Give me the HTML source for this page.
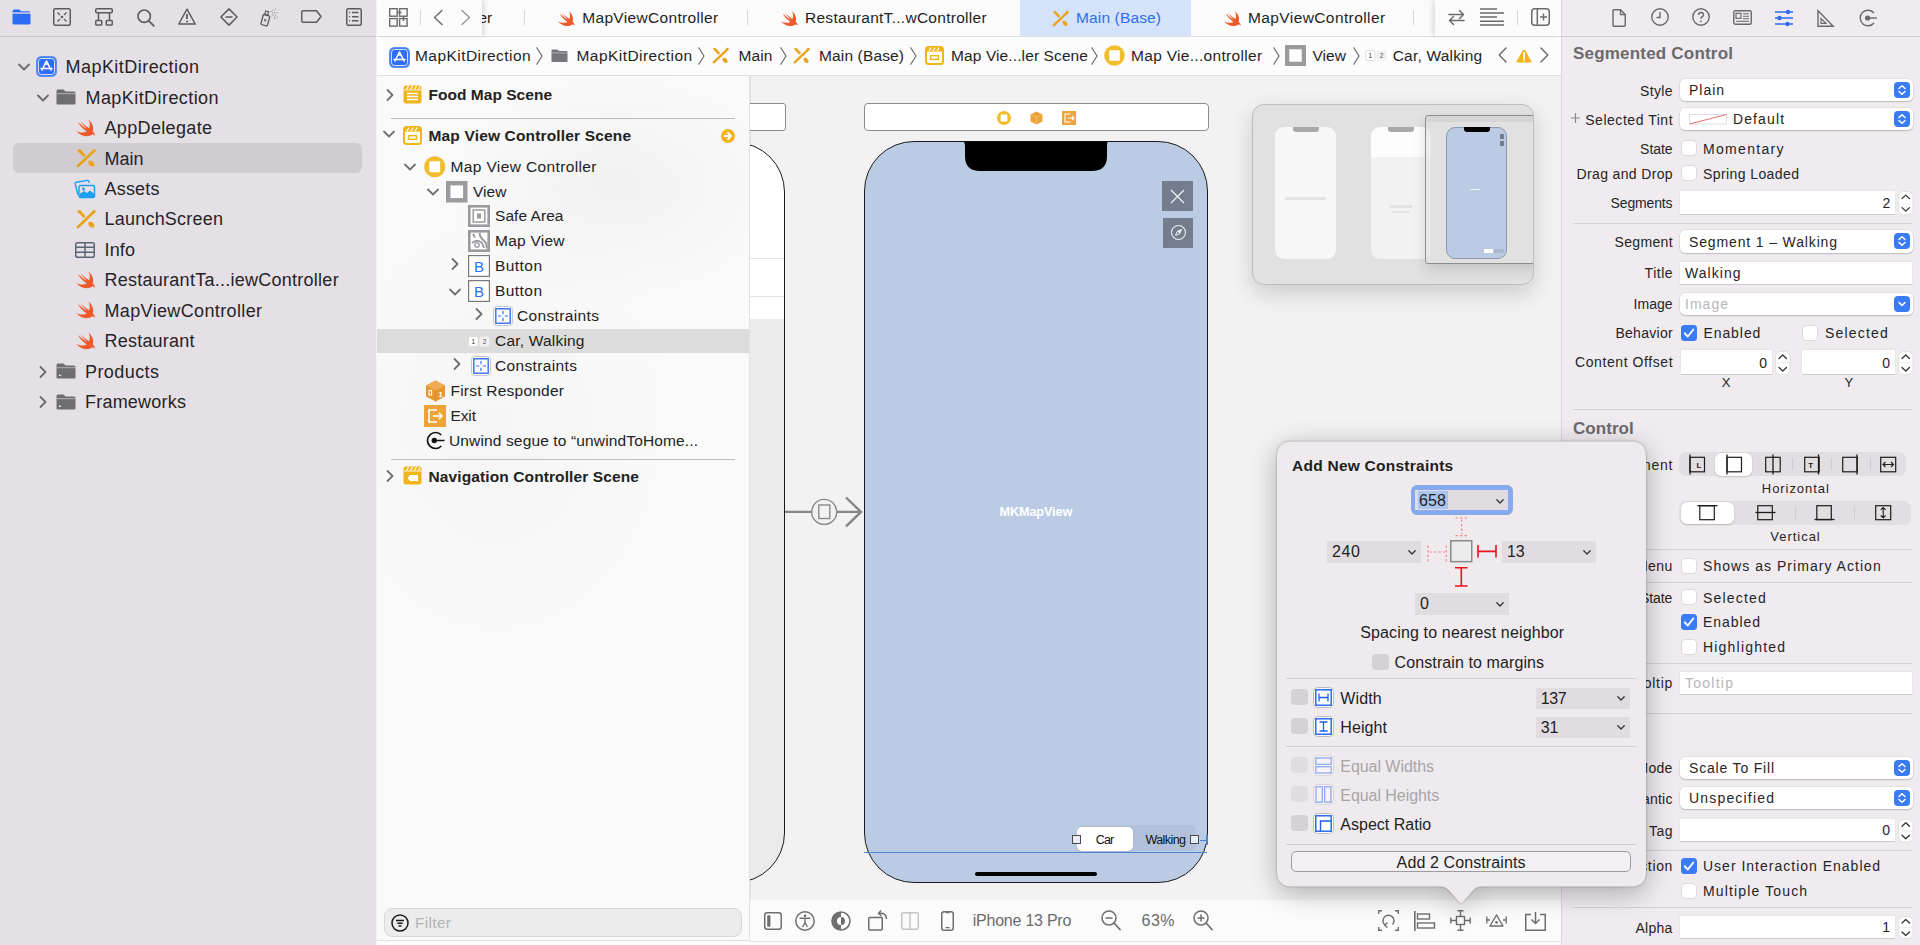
<!DOCTYPE html>
<html><head><meta charset="utf-8">
<style>
*{box-sizing:border-box}
html,body{margin:0;padding:0}
body{width:1920px;height:945px;position:relative;overflow:hidden;font-family:"Liberation Sans",sans-serif;color:#1f1f1f;background:#f2f2f2}
.a{position:absolute}
.t{position:absolute;white-space:nowrap;line-height:1}
svg{position:absolute;overflow:visible}
</style></head><body>
<div class="a" style="left:0px;top:0px;width:376px;height:945px;background:#e5e0e5;"></div>
<div class="a" style="left:0px;top:36px;width:376px;height:1px;background:#cdc8cd;"></div>
<svg style="left:12px;top:9px" width="19" height="16" viewBox="0 0 19 16"><path d="M0.5 2.2 Q0.5 0.5 2.2 0.5 L6.5 0.5 Q7.5 0.5 8.2 1.3 L9 2.3 L17 2.3 Q18.5 2.3 18.5 3.8 L18.5 14 Q18.5 15.5 17 15.5 L2 15.5 Q0.5 15.5 0.5 14 Z" fill="#2e6bf5"/><rect x="0" y="3.4" width="19" height="1.3" fill="#e5e0e5"/></svg>
<svg style="left:53px;top:8px" width="18" height="18" viewBox="0 0 18 18"><rect x="0.75" y="0.75" width="16.5" height="16.5" rx="1.5" fill="none" stroke="#5e5b5e" stroke-width="1.5"/><path d="M4.5 4.5 L7 7 M13.5 4.5 L11 7 M4.5 13.5 L7 11 M13.5 13.5 L11 11" stroke="#5e5b5e" stroke-width="1.3"/><circle cx="9" cy="9" r="1.3" fill="#5e5b5e"/></svg>
<svg style="left:95px;top:8px" width="18" height="18" viewBox="0 0 18 18"><rect x="0.75" y="0.75" width="16.5" height="4" rx="1" fill="none" stroke="#5e5b5e" stroke-width="1.5"/><path d="M3.5 5 L3.5 12 M14.5 5 L14.5 12" stroke="#5e5b5e" stroke-width="1.5"/><rect x="0.75" y="12.5" width="6" height="4.5" rx="0.8" fill="none" stroke="#5e5b5e" stroke-width="1.5"/><rect x="11.25" y="12.5" width="6" height="4.5" rx="0.8" fill="none" stroke="#5e5b5e" stroke-width="1.5"/></svg>
<svg style="left:137px;top:9px" width="18" height="18" viewBox="0 0 18 18"><circle cx="7.2" cy="7.2" r="6.2" fill="none" stroke="#5e5b5e" stroke-width="1.6"/><path d="M11.8 11.8 L16.8 16.8" stroke="#5e5b5e" stroke-width="1.8" stroke-linecap="round"/></svg>
<svg style="left:178px;top:8px" width="18" height="17" viewBox="0 0 18 17"><path d="M9 1.2 L17.2 16 L0.8 16 Z" fill="none" stroke="#5e5b5e" stroke-width="1.5" stroke-linejoin="round"/><path d="M9 6 L9 11" stroke="#5e5b5e" stroke-width="1.8"/><circle cx="9" cy="13.4" r="1" fill="#5e5b5e"/></svg>
<svg style="left:220px;top:8px" width="18" height="18" viewBox="0 0 18 18"><path d="M9 0.9 L17.1 9 L9 17.1 L0.9 9 Z" fill="none" stroke="#5e5b5e" stroke-width="1.5" stroke-linejoin="round"/><path d="M5.5 9 L12.5 9" stroke="#5e5b5e" stroke-width="1.5"/></svg>
<svg style="left:260px;top:8px" width="22" height="19" viewBox="0 0 22 19"><path d="M4 6.5 L9 7.8 Q10 8.1 9.8 9 L7.5 17 Q7.2 18 6.2 17.8 L1.7 16.6 Q0.7 16.3 1 15.3 L3 8 Q3.3 6.2 4 6.5 Z" fill="none" stroke="#5e5b5e" stroke-width="1.3"/><rect x="5.2" y="3.2" width="3" height="3.5" transform="rotate(15 6.7 5)" fill="none" stroke="#5e5b5e" stroke-width="1.2"/><path d="M4.2 11 L6.2 13.5 M6.5 11.3 L4 13.2" stroke="#5e5b5e" stroke-width="1"/><g fill="#5e5b5e" opacity="0.75"><circle cx="11" cy="3.5" r="0.6"/><circle cx="13" cy="2.5" r="0.6"/><circle cx="15.5" cy="1" r="0.6"/><circle cx="12.5" cy="5" r="0.6"/><circle cx="14.5" cy="4.5" r="0.6"/><circle cx="17" cy="4.8" r="0.6"/><circle cx="13" cy="7" r="0.6"/><circle cx="15.5" cy="7" r="0.6"/><circle cx="14.5" cy="9" r="0.6"/><circle cx="17" cy="9" r="0.6"/><circle cx="15" cy="10.5" r="0.6"/></g></svg>
<svg style="left:301px;top:10px" width="21" height="13" viewBox="0 0 21 13"><path d="M2 0.75 L15.5 0.75 L20 6.5 L15.5 12.25 L2 12.25 Q0.75 12.25 0.75 11 L0.75 2 Q0.75 0.75 2 0.75 Z" fill="none" stroke="#5e5b5e" stroke-width="1.5" stroke-linejoin="round"/></svg>
<svg style="left:346px;top:8px" width="16" height="18" viewBox="0 0 16 18"><rect x="0.75" y="0.75" width="14.5" height="16.5" rx="1.5" fill="none" stroke="#5e5b5e" stroke-width="1.5"/><path d="M6 4.5 L12.5 4.5 M6 8.7 L12.5 8.7 M6 12.7 L12.5 12.7" stroke="#5e5b5e" stroke-width="1.5"/><circle cx="3.6" cy="4.5" r="0.7" fill="#5e5b5e"/><circle cx="3.6" cy="8.7" r="0.7" fill="#5e5b5e"/><circle cx="3.6" cy="12.7" r="0.7" fill="#5e5b5e"/></svg>
<div class="a" style="left:12.5px;top:143px;width:349px;height:30px;background:#d1ccd1;border-radius:6px;"></div>
<svg style="left:18px;top:63.3px" width="12" height="8" viewBox="0 0 12 8"><path d="M1 1.5 L6 6.5 L11 1.5" fill="none" stroke="#6d6a6d" stroke-width="1.8" stroke-linecap="round" stroke-linejoin="round"/></svg>
<svg style="left:36px;top:56.3px" width="21" height="21" viewBox="0 0 21 21"><rect x="0.75" y="0.75" width="19.5" height="19.5" rx="4.5" fill="#2f6df6" stroke="#5a8ff8" stroke-width="1.5"/><rect x="2.5" y="2.5" width="16" height="16" rx="3" fill="none" stroke="#fff" stroke-width="0.9" opacity="0.9"/><path d="M10.5 5 L6 14 M10.5 5 L15 14 M5 12.5 L16 12.5 M8.8 8 L12.2 8" stroke="#fff" stroke-width="1.6" stroke-linecap="round" fill="none"/></svg>
<div class="t" style="left:65.5px;top:58.2px;font-size:18px;color:#262426;letter-spacing:0.46px;">MapKitDirection</div>
<svg style="left:37px;top:93.75px" width="12" height="8" viewBox="0 0 12 8"><path d="M1 1.5 L6 6.5 L11 1.5" fill="none" stroke="#6d6a6d" stroke-width="1.8" stroke-linecap="round" stroke-linejoin="round"/></svg>
<svg style="left:56px;top:89.25px" width="20" height="16" viewBox="0 0 20 16"><path d="M0.5 2 Q0.5 0.5 2 0.5 L7 0.5 Q8 0.5 8.6 1.5 L9.2 2.5 L18 2.5 Q19.5 2.5 19.5 4 L19.5 14.5 Q19.5 15.5 18.5 15.5 L1.5 15.5 Q0.5 15.5 0.5 14.5 Z" fill="#6e6d72"/><rect x="0.5" y="4.2" width="19" height="1" fill="#e5e0e5" opacity="0.6"/></svg>
<div class="t" style="left:85.5px;top:88.6px;font-size:18px;color:#262426;letter-spacing:0.43px;">MapKitDirection</div>
<svg style="left:76px;top:117.69999999999999px" width="20" height="20" viewBox="0 0 20 20"><path d="M12.4 1.4 C16.5 4.5 18 9.5 16.8 13.3 C18.2 15 19.2 16.5 19.4 17.8 C18.2 16.6 17 16.3 16 16.8 C13 18.6 8 18.8 4.5 16.5 C2.5 15.3 1 14 0.2 13.1 C3.5 14.8 7.5 15.2 10.8 13.6 C7.5 11.2 4 8 1.9 3.9 C5 6.8 8.5 9.5 11 11 C8.5 8.5 6 5.5 4.3 3.2 C7.3 6 10.5 8.5 13 10.2 C14.3 7.3 14 4 12.4 1.4 Z" fill="#ef5a2b"/></svg>
<div class="t" style="left:104.5px;top:119.1px;font-size:18px;color:#262426;letter-spacing:0.34px;">AppDelegate</div>
<svg style="left:76px;top:148.14999999999998px" width="20" height="20" viewBox="0 0 20 20"><path d="M0.8 2.2 L4 0.8 L9.6 7.2 L7.6 9 Z" fill="#eaa31d"/><path d="M2 18 L17.2 3.6" stroke="#eaa31d" stroke-width="2.7" stroke-linecap="round"/><circle cx="18" cy="2.6" r="1.7" fill="#eaa31d"/><path d="M12.3 13.2 Q15 11.8 17.2 14 Q19.3 16.5 17.8 18.6 Q15.8 19.2 13.6 17.6 Q12.2 16 12.3 13.2 Z" fill="#eaa31d"/></svg>
<div class="t" style="left:104.5px;top:149.5px;font-size:18px;color:#262426;letter-spacing:-0.01px;">Main</div>
<svg style="left:74px;top:179.6px" width="22" height="18" viewBox="0 0 22 18"><g fill="none" stroke="#1ea0f2" stroke-width="1.4"><path d="M4 15 L1.2 4 Q0.9 2.6 2.3 2.3 L13.3 0.4 Q14.6 0.2 14.9 1.5 L15.2 3"/></g><rect x="5" y="5.5" width="15.5" height="12" rx="1.5" fill="none" stroke="#1ea0f2" stroke-width="1.5"/><path d="M5.5 17 L5.5 14 L10 11 L13 13 L16 10.5 L20 13.5 L20 17 Z" fill="#1ea0f2"/><circle cx="9.5" cy="9" r="1.5" fill="#1ea0f2"/></svg>
<div class="t" style="left:104.5px;top:180.0px;font-size:18px;color:#262426;letter-spacing:0.20px;">Assets</div>
<svg style="left:76px;top:209.05px" width="20" height="20" viewBox="0 0 20 20"><path d="M0.8 2.2 L4 0.8 L9.6 7.2 L7.6 9 Z" fill="#eaa31d"/><path d="M2 18 L17.2 3.6" stroke="#eaa31d" stroke-width="2.7" stroke-linecap="round"/><circle cx="18" cy="2.6" r="1.7" fill="#eaa31d"/><path d="M12.3 13.2 Q15 11.8 17.2 14 Q19.3 16.5 17.8 18.6 Q15.8 19.2 13.6 17.6 Q12.2 16 12.3 13.2 Z" fill="#eaa31d"/></svg>
<div class="t" style="left:104.5px;top:210.4px;font-size:18px;color:#262426;letter-spacing:0.22px;">LaunchScreen</div>
<svg style="left:75px;top:241.5px" width="20" height="16" viewBox="0 0 20 16"><rect x="0.75" y="0.75" width="18.5" height="14.5" rx="1.8" fill="none" stroke="#5a6674" stroke-width="1.5"/><path d="M1 5.2 L19 5.2 M1 10.2 L19 10.2 M10 1 L10 15" stroke="#5a6674" stroke-width="1.5"/></svg>
<div class="t" style="left:104.5px;top:240.9px;font-size:18px;color:#262426;letter-spacing:0.16px;">Info</div>
<svg style="left:76px;top:269.95px" width="20" height="20" viewBox="0 0 20 20"><path d="M12.4 1.4 C16.5 4.5 18 9.5 16.8 13.3 C18.2 15 19.2 16.5 19.4 17.8 C18.2 16.6 17 16.3 16 16.8 C13 18.6 8 18.8 4.5 16.5 C2.5 15.3 1 14 0.2 13.1 C3.5 14.8 7.5 15.2 10.8 13.6 C7.5 11.2 4 8 1.9 3.9 C5 6.8 8.5 9.5 11 11 C8.5 8.5 6 5.5 4.3 3.2 C7.3 6 10.5 8.5 13 10.2 C14.3 7.3 14 4 12.4 1.4 Z" fill="#ef5a2b"/></svg>
<div class="t" style="left:104.5px;top:271.3px;font-size:18px;color:#262426;letter-spacing:0.26px;">RestaurantTa...iewController</div>
<svg style="left:76px;top:300.4px" width="20" height="20" viewBox="0 0 20 20"><path d="M12.4 1.4 C16.5 4.5 18 9.5 16.8 13.3 C18.2 15 19.2 16.5 19.4 17.8 C18.2 16.6 17 16.3 16 16.8 C13 18.6 8 18.8 4.5 16.5 C2.5 15.3 1 14 0.2 13.1 C3.5 14.8 7.5 15.2 10.8 13.6 C7.5 11.2 4 8 1.9 3.9 C5 6.8 8.5 9.5 11 11 C8.5 8.5 6 5.5 4.3 3.2 C7.3 6 10.5 8.5 13 10.2 C14.3 7.3 14 4 12.4 1.4 Z" fill="#ef5a2b"/></svg>
<div class="t" style="left:104.5px;top:301.8px;font-size:18px;color:#262426;letter-spacing:0.36px;">MapViewController</div>
<svg style="left:76px;top:330.85px" width="20" height="20" viewBox="0 0 20 20"><path d="M12.4 1.4 C16.5 4.5 18 9.5 16.8 13.3 C18.2 15 19.2 16.5 19.4 17.8 C18.2 16.6 17 16.3 16 16.8 C13 18.6 8 18.8 4.5 16.5 C2.5 15.3 1 14 0.2 13.1 C3.5 14.8 7.5 15.2 10.8 13.6 C7.5 11.2 4 8 1.9 3.9 C5 6.8 8.5 9.5 11 11 C8.5 8.5 6 5.5 4.3 3.2 C7.3 6 10.5 8.5 13 10.2 C14.3 7.3 14 4 12.4 1.4 Z" fill="#ef5a2b"/></svg>
<div class="t" style="left:104.5px;top:332.2px;font-size:18px;color:#262426;letter-spacing:0.22px;">Restaurant</div>
<svg style="left:39px;top:365.8px" width="8" height="12" viewBox="0 0 8 12"><path d="M1.5 1 L6.5 6 L1.5 11" fill="none" stroke="#6d6a6d" stroke-width="1.8" stroke-linecap="round" stroke-linejoin="round"/></svg>
<svg style="left:56px;top:363.3px" width="20" height="16" viewBox="0 0 20 16"><path d="M0.5 2 Q0.5 0.5 2 0.5 L7 0.5 Q8 0.5 8.6 1.5 L9.2 2.5 L18 2.5 Q19.5 2.5 19.5 4 L19.5 14.5 Q19.5 15.5 18.5 15.5 L1.5 15.5 Q0.5 15.5 0.5 14.5 Z" fill="#6e6d72"/><rect x="0.5" y="4.2" width="19" height="1" fill="#e5e0e5" opacity="0.6"/><path d="M3 11 L6 13 L3 13 Z" fill="#e5e0e5"/></svg>
<div class="t" style="left:85px;top:362.7px;font-size:18px;color:#262426;letter-spacing:0.42px;">Products</div>
<svg style="left:39px;top:396.25px" width="8" height="12" viewBox="0 0 8 12"><path d="M1.5 1 L6.5 6 L1.5 11" fill="none" stroke="#6d6a6d" stroke-width="1.8" stroke-linecap="round" stroke-linejoin="round"/></svg>
<svg style="left:56px;top:393.75px" width="20" height="16" viewBox="0 0 20 16"><path d="M0.5 2 Q0.5 0.5 2 0.5 L7 0.5 Q8 0.5 8.6 1.5 L9.2 2.5 L18 2.5 Q19.5 2.5 19.5 4 L19.5 14.5 Q19.5 15.5 18.5 15.5 L1.5 15.5 Q0.5 15.5 0.5 14.5 Z" fill="#6e6d72"/><rect x="0.5" y="4.2" width="19" height="1" fill="#e5e0e5" opacity="0.6"/><path d="M3 11 L6 13 L3 13 Z" fill="#e5e0e5"/></svg>
<div class="t" style="left:85px;top:393.1px;font-size:18px;color:#262426;letter-spacing:0.22px;">Frameworks</div>
<div class="a" style="left:377px;top:0px;width:1185px;height:36px;background:#fbfbfb;"></div>
<div class="a" style="left:377px;top:36px;width:1185px;height:1px;background:#dedede;"></div>
<div class="a" style="left:377px;top:37px;width:1185px;height:38px;background:#fcfcfc;"></div>
<div class="a" style="left:377px;top:75px;width:1185px;height:1px;background:#e0e0e0;"></div>
<div class="t" style="left:478.5px;top:9.8px;font-size:15.5px;color:#1f1f1f;">er</div>
<div class="a" style="left:524px;top:9.5px;width:1px;height:15.5px;background:#d6d6d6;"></div>
<svg style="left:557.5px;top:10.3px" width="17.5" height="17.5" viewBox="0 0 20 20"><path d="M12.4 1.4 C16.5 4.5 18 9.5 16.8 13.3 C18.2 15 19.2 16.5 19.4 17.8 C18.2 16.6 17 16.3 16 16.8 C13 18.6 8 18.8 4.5 16.5 C2.5 15.3 1 14 0.2 13.1 C3.5 14.8 7.5 15.2 10.8 13.6 C7.5 11.2 4 8 1.9 3.9 C5 6.8 8.5 9.5 11 11 C8.5 8.5 6 5.5 4.3 3.2 C7.3 6 10.5 8.5 13 10.2 C14.3 7.3 14 4 12.4 1.4 Z" fill="#ef5a2b"/></svg>
<div class="t" style="left:582.2px;top:9.8px;font-size:15.5px;color:#1f1f1f;letter-spacing:0.33px;">MapViewController</div>
<div class="a" style="left:747px;top:9.5px;width:1px;height:15.5px;background:#d6d6d6;"></div>
<svg style="left:780.5px;top:10.3px" width="17.5" height="17.5" viewBox="0 0 20 20"><path d="M12.4 1.4 C16.5 4.5 18 9.5 16.8 13.3 C18.2 15 19.2 16.5 19.4 17.8 C18.2 16.6 17 16.3 16 16.8 C13 18.6 8 18.8 4.5 16.5 C2.5 15.3 1 14 0.2 13.1 C3.5 14.8 7.5 15.2 10.8 13.6 C7.5 11.2 4 8 1.9 3.9 C5 6.8 8.5 9.5 11 11 C8.5 8.5 6 5.5 4.3 3.2 C7.3 6 10.5 8.5 13 10.2 C14.3 7.3 14 4 12.4 1.4 Z" fill="#ef5a2b"/></svg>
<div class="t" style="left:805px;top:9.8px;font-size:15.5px;color:#1f1f1f;letter-spacing:0.28px;">RestaurantT...wController</div>
<div class="a" style="left:1019.5px;top:0px;width:171.5px;height:36px;background:#d4e2fa;"></div>
<svg style="left:1052px;top:9.5px" width="17" height="17" viewBox="0 0 20 20"><path d="M0.8 2.2 L4 0.8 L9.6 7.2 L7.6 9 Z" fill="#eaa31d"/><path d="M2 18 L17.2 3.6" stroke="#eaa31d" stroke-width="2.7" stroke-linecap="round"/><circle cx="18" cy="2.6" r="1.7" fill="#eaa31d"/><path d="M12.3 13.2 Q15 11.8 17.2 14 Q19.3 16.5 17.8 18.6 Q15.8 19.2 13.6 17.6 Q12.2 16 12.3 13.2 Z" fill="#eaa31d"/></svg>
<div class="t" style="left:1076px;top:9.8px;font-size:15.5px;color:#2d6ff0;letter-spacing:0.14px;">Main (Base)</div>
<svg style="left:1223.5px;top:10.3px" width="17.5" height="17.5" viewBox="0 0 20 20"><path d="M12.4 1.4 C16.5 4.5 18 9.5 16.8 13.3 C18.2 15 19.2 16.5 19.4 17.8 C18.2 16.6 17 16.3 16 16.8 C13 18.6 8 18.8 4.5 16.5 C2.5 15.3 1 14 0.2 13.1 C3.5 14.8 7.5 15.2 10.8 13.6 C7.5 11.2 4 8 1.9 3.9 C5 6.8 8.5 9.5 11 11 C8.5 8.5 6 5.5 4.3 3.2 C7.3 6 10.5 8.5 13 10.2 C14.3 7.3 14 4 12.4 1.4 Z" fill="#ef5a2b"/></svg>
<div class="t" style="left:1248px;top:9.8px;font-size:15.5px;color:#1f1f1f;letter-spacing:0.40px;">MapViewController</div>
<div class="a" style="left:1413px;top:9.5px;width:1px;height:15.5px;background:#d6d6d6;"></div>
<div class="a" style="left:1435px;top:0px;width:126px;height:36px;background:#fbfbfb;box-shadow:-3px 0 4px rgba(0,0,0,0.10);"></div>
<svg style="left:1447px;top:8px" width="19" height="18" viewBox="0 0 19 18"><path d="M2 6.5 L16.5 6.5 M12.5 2.5 L16.5 6.5 L12.5 10.5 M17 12.5 L2.5 12.5 M6.5 8.5 L2.5 12.5 L6.5 16.5" fill="none" stroke="#6b6b6b" stroke-width="1.5" stroke-linecap="round" stroke-linejoin="round"/></svg>
<svg style="left:1479px;top:8px" width="26" height="18" viewBox="0 0 26 18"><path d="M1 1 L18 1 M1 5 L25 5 M1 9 L18 9 M1 13.3 L25 13.3 M1 17 L25 17" stroke="#6b6b6b" stroke-width="1.4"/></svg>
<div class="a" style="left:1517px;top:9.5px;width:1px;height:15.5px;background:#d6d6d6;"></div>
<svg style="left:1531px;top:8px" width="19" height="18" viewBox="0 0 19 18"><rect x="0.75" y="0.75" width="17.5" height="16.5" rx="3" fill="none" stroke="#6b6b6b" stroke-width="1.5"/><path d="M6.3 1 L6.3 17" stroke="#6b6b6b" stroke-width="1.5"/><path d="M12.5 5.5 L12.5 12.5 M9 9 L16 9" stroke="#6b6b6b" stroke-width="1.4"/></svg>
<div class="a" style="left:377px;top:0px;width:105px;height:36px;background:#fbfbfb;box-shadow:3px 0 4px rgba(0,0,0,0.10);"></div>
<svg style="left:389px;top:8px" width="19" height="19" viewBox="0 0 19 19"><g fill="none" stroke="#6b6b6b" stroke-width="1.4"><rect x="0.7" y="0.7" width="7.5" height="7.5"/><rect x="10.6" y="0.7" width="7.5" height="7.5"/><rect x="0.7" y="10.6" width="7.5" height="7.5"/><rect x="10.6" y="10.6" width="7.5" height="7.5"/></g><path d="M8.5 4.5 L12.5 4.5 M14.5 8.5 L14.5 13" stroke="#6b6b6b" stroke-width="1.4"/></svg>
<div class="a" style="left:420px;top:9.5px;width:1px;height:15.5px;background:#d6d6d6;"></div>
<svg style="left:433px;top:10px" width="10" height="15" viewBox="0 0 10 15"><path d="M9 0.5 L1.5 7.5 L9 14.5" fill="none" stroke="#6b6b6b" stroke-width="1.5" stroke-linecap="round" stroke-linejoin="round"/></svg>
<svg style="left:460.5px;top:10px" width="10" height="15" viewBox="0 0 10 15"><path d="M1 0.5 L8.5 7.5 L1 14.5" fill="none" stroke="#9a9a9a" stroke-width="1.5" stroke-linecap="round" stroke-linejoin="round"/></svg>
<svg style="left:388.5px;top:46.5px" width="21" height="21" viewBox="0 0 21 21"><rect x="0.75" y="0.75" width="19.5" height="19.5" rx="4.5" fill="#2f6df6" stroke="#5a8ff8" stroke-width="1.5"/><rect x="2.5" y="2.5" width="16" height="16" rx="3" fill="none" stroke="#fff" stroke-width="0.9" opacity="0.9"/><path d="M10.5 5 L6 14 M10.5 5 L15 14 M5 12.5 L16 12.5 M8.8 8 L12.2 8" stroke="#fff" stroke-width="1.6" stroke-linecap="round" fill="none"/></svg>
<div class="t" style="left:415px;top:47.9px;font-size:15.5px;color:#1f1f1f;letter-spacing:0.44px;">MapKitDirection</div>
<svg style="left:536px;top:46.5px" width="7" height="18" viewBox="0 0 7 18"><path d="M0.8 0.8 L6 9 L0.8 17.2" fill="none" stroke="#6a6a6a" stroke-width="1.2" stroke-linecap="round" stroke-linejoin="round"/></svg>
<svg style="left:551px;top:48.5px" width="17" height="13.5" viewBox="0 0 20 16"><path d="M0.5 2 Q0.5 0.5 2 0.5 L7 0.5 Q8 0.5 8.6 1.5 L9.2 2.5 L18 2.5 Q19.5 2.5 19.5 4 L19.5 14.5 Q19.5 15.5 18.5 15.5 L1.5 15.5 Q0.5 15.5 0.5 14.5 Z" fill="#77767b"/><rect x="0.5" y="4.2" width="19" height="1" fill="#e5e0e5" opacity="0.6"/></svg>
<div class="t" style="left:576.5px;top:47.9px;font-size:15.5px;color:#1f1f1f;letter-spacing:0.44px;">MapKitDirection</div>
<svg style="left:698px;top:46.5px" width="7" height="18" viewBox="0 0 7 18"><path d="M0.8 0.8 L6 9 L0.8 17.2" fill="none" stroke="#6a6a6a" stroke-width="1.2" stroke-linecap="round" stroke-linejoin="round"/></svg>
<svg style="left:711.5px;top:47px" width="17" height="17" viewBox="0 0 20 20"><path d="M0.8 2.2 L4 0.8 L9.6 7.2 L7.6 9 Z" fill="#eaa31d"/><path d="M2 18 L17.2 3.6" stroke="#eaa31d" stroke-width="2.7" stroke-linecap="round"/><circle cx="18" cy="2.6" r="1.7" fill="#eaa31d"/><path d="M12.3 13.2 Q15 11.8 17.2 14 Q19.3 16.5 17.8 18.6 Q15.8 19.2 13.6 17.6 Q12.2 16 12.3 13.2 Z" fill="#eaa31d"/></svg>
<div class="t" style="left:738.5px;top:47.9px;font-size:15.5px;color:#1f1f1f;letter-spacing:0.13px;">Main</div>
<svg style="left:780px;top:46.5px" width="7" height="18" viewBox="0 0 7 18"><path d="M0.8 0.8 L6 9 L0.8 17.2" fill="none" stroke="#6a6a6a" stroke-width="1.2" stroke-linecap="round" stroke-linejoin="round"/></svg>
<svg style="left:793px;top:47px" width="17" height="17" viewBox="0 0 20 20"><path d="M0.8 2.2 L4 0.8 L9.6 7.2 L7.6 9 Z" fill="#eaa31d"/><path d="M2 18 L17.2 3.6" stroke="#eaa31d" stroke-width="2.7" stroke-linecap="round"/><circle cx="18" cy="2.6" r="1.7" fill="#eaa31d"/><path d="M12.3 13.2 Q15 11.8 17.2 14 Q19.3 16.5 17.8 18.6 Q15.8 19.2 13.6 17.6 Q12.2 16 12.3 13.2 Z" fill="#eaa31d"/></svg>
<div class="t" style="left:819px;top:47.9px;font-size:15.5px;color:#1f1f1f;letter-spacing:0.14px;">Main (Base)</div>
<svg style="left:910px;top:46.5px" width="7" height="18" viewBox="0 0 7 18"><path d="M0.8 0.8 L6 9 L0.8 17.2" fill="none" stroke="#6a6a6a" stroke-width="1.2" stroke-linecap="round" stroke-linejoin="round"/></svg>
<svg style="left:924.5px;top:46px" width="19" height="19" viewBox="0 0 19 19"><rect x="1" y="1" width="17" height="17" rx="2.5" fill="#fff" stroke="#f0b41c" stroke-width="2"/><rect x="1" y="1" width="17" height="4.6" fill="#f0b41c"/><path d="M4 5.2 L6 1.6 M8 5.2 L10 1.6 M12 5.2 L14 1.6" stroke="#fff" stroke-width="1.2"/><rect x="5.5" y="9.7" width="8" height="3.6" fill="none" stroke="#f0b41c" stroke-width="1.4"/></svg>
<div class="t" style="left:951px;top:47.9px;font-size:15.5px;color:#1f1f1f;letter-spacing:0.11px;">Map Vie...ler Scene</div>
<svg style="left:1091px;top:46.5px" width="7" height="18" viewBox="0 0 7 18"><path d="M0.8 0.8 L6 9 L0.8 17.2" fill="none" stroke="#6a6a6a" stroke-width="1.2" stroke-linecap="round" stroke-linejoin="round"/></svg>
<svg style="left:1104px;top:44.5px" width="21" height="21" viewBox="0 0 21 21"><circle cx="10.5" cy="10.5" r="10.3" fill="#f2bd2a"/><rect x="5.2" y="5.2" width="10.6" height="10.6" rx="0.8" fill="#fff"/></svg>
<div class="t" style="left:1131px;top:47.9px;font-size:15.5px;color:#1f1f1f;letter-spacing:0.31px;">Map Vie...ontroller</div>
<svg style="left:1272.5px;top:46.5px" width="7" height="18" viewBox="0 0 7 18"><path d="M0.8 0.8 L6 9 L0.8 17.2" fill="none" stroke="#6a6a6a" stroke-width="1.2" stroke-linecap="round" stroke-linejoin="round"/></svg>
<svg style="left:1284.5px;top:44.5px" width="21" height="21" viewBox="0 0 21 21"><rect x="0" y="0" width="21" height="21" fill="#9a9a9f"/><rect x="4.3" y="4.3" width="12.4" height="12.4" fill="#fff"/></svg>
<div class="t" style="left:1312.5px;top:47.9px;font-size:15.5px;color:#1f1f1f;letter-spacing:0.06px;">View</div>
<svg style="left:1352.5px;top:46.5px" width="7" height="18" viewBox="0 0 7 18"><path d="M0.8 0.8 L6 9 L0.8 17.2" fill="none" stroke="#6a6a6a" stroke-width="1.2" stroke-linecap="round" stroke-linejoin="round"/></svg>
<svg style="left:1365px;top:50px" width="22" height="11" viewBox="0 0 22 11"><rect x="0.5" y="0.5" width="9.5" height="10" rx="1.5" fill="#fff" stroke="#d8d8d8" stroke-width="0.8"/><rect x="11.5" y="0.5" width="10" height="10" rx="1.5" fill="#f0f0f0"/><text x="5.2" y="8" font-size="6.5" text-anchor="middle" font-family="Liberation Sans" fill="#333">1</text><text x="16.5" y="8" font-size="6.5" text-anchor="middle" font-family="Liberation Sans" fill="#555">2</text></svg>
<div class="t" style="left:1392.7px;top:47.9px;font-size:15.5px;color:#1f1f1f;letter-spacing:0.20px;">Car, Walking</div>
<svg style="left:1498px;top:47px" width="9" height="16" viewBox="0 0 9 16"><path d="M8 1 L1.2 8 L8 15" fill="none" stroke="#6a6a6a" stroke-width="1.4" stroke-linecap="round" stroke-linejoin="round"/></svg>
<svg style="left:1516px;top:49px" width="16" height="14" viewBox="0 0 16 14"><path d="M8 0.8 Q8.8 0.8 9.3 1.6 L15.4 12.2 Q15.9 13.4 14.6 13.4 L1.4 13.4 Q0.1 13.4 0.6 12.2 L6.7 1.6 Q7.2 0.8 8 0.8 Z" fill="#f2b31d"/><path d="M8 4 L8 9" stroke="#fff" stroke-width="1.8" stroke-linecap="round"/><circle cx="8" cy="11.3" r="1" fill="#fff"/></svg>
<svg style="left:1540px;top:47px" width="9" height="16" viewBox="0 0 9 16"><path d="M1 1 L7.8 8 L1 15" fill="none" stroke="#6a6a6a" stroke-width="1.4" stroke-linecap="round" stroke-linejoin="round"/></svg>
<div class="a" style="left:750px;top:76px;width:811px;height:824px;background:#f2f2f2;"></div>
<div class="a" style="left:750px;top:76px;width:1px;height:864px;background:#e4e4e4;"></div>
<div class="a" style="left:729px;top:103.2px;width:56.5px;height:27.8px;background:#fff;border:1px solid #8c8c8c;border-radius:3px;"></div>
<div class="a" style="left:684px;top:141.5px;width:100.5px;height:741px;border:1.6px solid #1b1b1b;border-radius:50px;background:linear-gradient(#fff 0,#fff 176px,#ebebeb 176px);overflow:hidden"><div class="a" style="left:60px;top:115.5px;width:40px;height:1px;background:#e4e4e4"></div><div class="a" style="left:60px;top:153.5px;width:40px;height:1px;background:#e4e4e4"></div></div>
<div class="a" style="left:863.5px;top:103.2px;width:345px;height:27.8px;background:#fff;border:1px solid #8c8c8c;border-radius:4px;"></div>
<svg style="left:997px;top:110.8px" width="14" height="14" viewBox="0 0 14 14"><circle cx="7" cy="7" r="7" fill="#f2bd2a"/><rect x="3.6" y="3.6" width="6.8" height="6.8" rx="0.6" fill="#fff"/></svg>
<svg style="left:1030px;top:111px" width="13" height="14" viewBox="0 0 13 14"><path d="M6.5 0.5 L12.5 3.5 L12.5 10.5 L6.5 13.5 L0.5 10.5 L0.5 3.5 Z" fill="#eda33b"/><path d="M0.5 3.5 L6.5 6.5 L12.5 3.5 M6.5 6.5 L6.5 13.5" stroke="#f6c98a" stroke-width="0.6" fill="none"/></svg>
<svg style="left:1062px;top:111px" width="14" height="14" viewBox="0 0 14 14"><rect x="0" y="0" width="14" height="14" fill="#eda33b"/><path d="M8.5 3 L3 3 L3 11 L8.5 11" fill="none" stroke="#fff" stroke-width="1.1"/><path d="M6 7 L12 7 M10 5 L12 7 L10 9" fill="none" stroke="#fff" stroke-width="1.1"/></svg>
<div class="a" style="left:864px;top:141px;width:343.5px;height:742px;border:1.6px solid #1b1b1b;border-radius:50px;background:#bccbe4;overflow:hidden"></div>
<svg style="left:963px;top:141px" width="146" height="31" viewBox="0 0 146 31"><path d="M0 0.5 L145 0.5 Q144 0.5 144 6 L144 15 Q144 30 129 30 L17 30 Q2 30 2 15 L2 6 Q2 0.5 0 0.5 Z" fill="#000"/></svg>
<div class="a" style="left:1162px;top:180.5px;width:31px;height:30.5px;background:#737d8d;"></div>
<svg style="left:1170px;top:188.5px" width="15" height="15" viewBox="0 0 15 15"><path d="M1 1 L14 14 M14 1 L1 14" stroke="#eef0f4" stroke-width="1.3"/></svg>
<div class="a" style="left:1163px;top:218px;width:30px;height:29.7px;background:#737d8d;"></div>
<svg style="left:1170.5px;top:225px" width="15" height="15" viewBox="0 0 15 15"><circle cx="7.5" cy="7.5" r="7" fill="none" stroke="#eef0f4" stroke-width="1.1"/><path d="M10.5 4.5 L6.3 6.3 L4.5 10.5 L8.7 8.7 Z" fill="none" stroke="#eef0f4" stroke-width="1"/><path d="M10.5 4.5 L6.3 6.3 L8.7 8.7 Z" fill="#eef0f4"/></svg>
<div class="t" style="left:735.85px;width:600px;text-align:center;top:505.6px;font-size:12.7px;color:#ffffff;font-weight:bold;letter-spacing:-0.11px;">MKMapView</div>
<div class="a" style="left:1077px;top:825.2px;width:118.6px;height:25.4px;background:rgba(60,80,110,0.08);border-radius:6px;"></div>
<div class="a" style="left:1077px;top:826.7px;width:56px;height:24.3px;background:#fff;border-radius:5px;box-shadow:0 1px 2px rgba(0,0,0,0.12);"></div>
<div class="t" style="left:804.59px;width:600px;text-align:center;top:833.5px;font-size:12.5px;color:#111;letter-spacing:-0.82px;">Car</div>
<div class="t" style="left:865.41px;width:600px;text-align:center;top:833.5px;font-size:12.5px;color:#111;letter-spacing:-0.58px;">Walking</div>
<div class="a" style="left:1071.5px;top:835px;width:9px;height:9px;background:#e8eef8;border:1.5px solid #4a4a4a;"></div>
<div class="a" style="left:1190.2px;top:835px;width:9px;height:9px;background:#e8eef8;border:1.5px solid #4a4a4a;"></div>
<div class="a" style="left:1199.5px;top:839.5px;width:8px;height:1.5px;background:#4a80cc;"></div>
<div class="a" style="left:1206px;top:835px;width:1.5px;height:10px;background:#4a80cc;"></div>
<div class="a" style="left:864px;top:851.5px;width:343px;height:1.5px;background:#4f84cf;"></div>
<div class="a" style="left:975px;top:871.6px;width:122px;height:4px;background:#000;border-radius:2px;"></div>
<svg style="left:784px;top:496.3px" width="80" height="32" viewBox="0 0 80 32"><path d="M1 15.9 L27.5 15.9 M53 15.9 L76 15.9 M62 1.5 L77 15.9 L62 30.3" fill="none" stroke="#858585" stroke-width="2.4"/><circle cx="40.2" cy="15.9" r="12.5" fill="none" stroke="#8a8a8a" stroke-width="1.4"/><rect x="34.8" y="9" width="11" height="13.5" fill="none" stroke="#8a8a8a" stroke-width="1.4"/></svg>
<div class="a" style="left:1252px;top:104px;width:281.5px;height:180.5px;background:#e1e1e1;border:1px solid #bdbdbd;border-radius:12px;box-shadow:0 8px 22px rgba(0,0,0,0.16);overflow:hidden"><div class="a" style="left:21.5px;top:22px;width:61px;height:132px;background:#f7f7f7;border-radius:9px"></div><div class="a" style="left:40px;top:22px;width:26px;height:5px;background:#a9a9a9;border-radius:0 0 3px 3px"></div><div class="a" style="left:118px;top:22px;width:60px;height:132px;background:linear-gradient(#fdfdfd 0,#fdfdfd 30px,#f2f2f2 30px);border-radius:9px"></div><div class="a" style="left:135px;top:22px;width:26px;height:5px;background:#a9a9a9;border-radius:0 0 3px 3px"></div><div class="a" style="left:172px;top:9.5px;width:115px;height:149px;border:1.2px solid #8e8e8e;background:linear-gradient(#d5d5d5 0,#d5d5d5 6px,rgba(225,225,225,0.6) 6px);border-radius:3px 0 0 3px;box-shadow:0 6px 14px rgba(0,0,0,0.12)"></div><div class="a" style="left:193px;top:22px;width:61px;height:132px;background:#bccbe4;border:0.6px solid #8c99ac;border-radius:9px"></div><div class="a" style="left:211px;top:22px;width:26px;height:5px;background:#000;border-radius:0 0 3px 3px"></div><div class="a" style="left:247px;top:29px;width:4px;height:5px;background:#737d8d"></div><div class="a" style="left:247px;top:35.5px;width:4px;height:5px;background:#737d8d"></div><div class="a" style="left:231px;top:144px;width:9px;height:3.5px;background:#fff"></div><div class="a" style="left:241px;top:144px;width:10px;height:3.5px;background:#aab8cf"></div><div class="a" style="left:32px;top:91.5px;width:41px;height:3px;background:#e4e4e4"></div><div class="a" style="left:137px;top:100px;width:22px;height:3px;background:#e3e3e3"></div><div class="a" style="left:139px;top:105.5px;width:18px;height:2.5px;background:#e6e6e6"></div><div class="a" style="left:217px;top:84px;width:10px;height:1.3px;background:#eef0f6"></div></div>
<div class="a" style="left:750px;top:900px;width:811px;height:40.5px;background:#fbfbfb;"></div>
<div class="a" style="left:750px;top:940.5px;width:811px;height:1px;background:#e2e2e2;"></div>
<div class="a" style="left:750px;top:941.5px;width:811px;height:4px;background:#fcfcfc;"></div>
<svg style="left:763.5px;top:912px" width="18" height="18" viewBox="0 0 18 18"><rect x="0.75" y="0.75" width="16.5" height="16.5" rx="2.5" fill="none" stroke="#6e6e6e" stroke-width="1.5"/><rect x="3.2" y="3.2" width="3.2" height="11.6" rx="0.8" fill="#6e6e6e"/></svg>
<svg style="left:795px;top:911px" width="20" height="20" viewBox="0 0 20 20"><circle cx="10" cy="10" r="9.2" fill="none" stroke="#6e6e6e" stroke-width="1.5"/><circle cx="10" cy="4.8" r="1.3" fill="#6e6e6e"/><path d="M4.6 7.3 L15.4 7.3 M10 7.5 L10 11.5 M10 11.5 L7.6 16 M10 11.5 L12.4 16" stroke="#6e6e6e" stroke-width="1.4" fill="none"/></svg>
<svg style="left:831px;top:911px" width="20" height="20" viewBox="0 0 20 20"><circle cx="10" cy="10" r="9" fill="#fff" stroke="#6e6e6e" stroke-width="1.6"/><path d="M10 1 A9 9 0 0 0 10 19 Z" fill="#6e6e6e"/><path d="M10 6 A4 4 0 0 0 10 14 Z" fill="#fff"/><path d="M10 6 A4 4 0 0 1 10 14 Z" fill="#6e6e6e"/></svg>
<svg style="left:867.5px;top:908.5px" width="21" height="22" viewBox="0 0 21 22"><rect x="0.75" y="8.5" width="13.5" height="12.5" rx="1" fill="none" stroke="#6e6e6e" stroke-width="1.5"/><path d="M11 4.5 Q18 3 18.5 10" fill="none" stroke="#6e6e6e" stroke-width="1.4"/><path d="M13 1.5 L10.5 4.5 L13.5 7" fill="none" stroke="#6e6e6e" stroke-width="1.4"/></svg>
<svg style="left:901px;top:912px" width="18" height="18" viewBox="0 0 18 18"><rect x="0.75" y="0.75" width="16.5" height="16.5" rx="2" fill="none" stroke="#c4c4c4" stroke-width="1.5"/><path d="M9 1 L9 17" stroke="#c4c4c4" stroke-width="1.5"/></svg>
<svg style="left:940.5px;top:911px" width="13" height="20" viewBox="0 0 13 20"><rect x="0.75" y="0.75" width="11.5" height="18.5" rx="2.3" fill="none" stroke="#6e6e6e" stroke-width="1.5"/><path d="M4.5 16.6 L8.5 16.6 M4.5 1.6 L8.5 1.6" stroke="#6e6e6e" stroke-width="1.1"/></svg>
<div class="t" style="left:972.8px;top:913.1px;font-size:16px;color:#6b6b6b;letter-spacing:-0.24px;">iPhone 13 Pro</div>
<svg style="left:1101px;top:910px" width="20" height="21" viewBox="0 0 20 21"><circle cx="8" cy="8" r="7" fill="none" stroke="#6e6e6e" stroke-width="1.5"/><path d="M13 13 L19 19.5" stroke="#6e6e6e" stroke-width="1.8" stroke-linecap="round"/><path d="M4.5 8 L11.5 8" stroke="#6e6e6e" stroke-width="1.5"/></svg>
<div class="t" style="left:1141.6px;top:913.1px;font-size:16px;color:#6b6b6b;letter-spacing:0.49px;">63%</div>
<svg style="left:1193px;top:910px" width="21" height="21" viewBox="0 0 21 21"><circle cx="8" cy="8" r="7" fill="none" stroke="#6e6e6e" stroke-width="1.5"/><path d="M13 13 L19 19.5" stroke="#6e6e6e" stroke-width="1.8" stroke-linecap="round"/><path d="M4.5 8 L11.5 8 M8 4.5 L8 11.5" stroke="#6e6e6e" stroke-width="1.5"/></svg>
<svg style="left:1378px;top:910px" width="21" height="21" viewBox="0 0 21 21"><path d="M0.7 4 L0.7 0.7 L4 0.7 M17 0.7 L20.3 0.7 L20.3 4 M20.3 17 L20.3 20.3 L17 20.3 M4 20.3 L0.7 20.3 L0.7 17" fill="none" stroke="#6e6e6e" stroke-width="1.4"/><path d="M7 15 A5.5 5.5 0 1 1 14.5 14.5" fill="none" stroke="#6e6e6e" stroke-width="1.4"/><path d="M9.5 12.5 L6.8 15.2 L9.5 17.5" fill="none" stroke="#6e6e6e" stroke-width="1.4"/></svg>
<svg style="left:1414px;top:911px" width="21" height="20" viewBox="0 0 21 20"><path d="M0.8 0 L0.8 20" stroke="#6e6e6e" stroke-width="1.6"/><rect x="3.5" y="3" width="12" height="5" fill="none" stroke="#6e6e6e" stroke-width="1.4"/><rect x="3.5" y="12" width="17" height="5" fill="none" stroke="#6e6e6e" stroke-width="1.4"/></svg>
<svg style="left:1450px;top:910px" width="21" height="21" viewBox="0 0 21 21"><rect x="6.5" y="6.5" width="8" height="8" fill="none" stroke="#6e6e6e" stroke-width="1.4"/><path d="M10.5 1 L10.5 6 M7.5 0.8 L13.5 0.8 M10.5 15 L10.5 20 M7.5 20.2 L13.5 20.2 M0.8 10.5 L6 10.5 M0.8 7.5 L0.8 13.5 M15 10.5 L20 10.5 M20.2 7.5 L20.2 13.5" stroke="#6e6e6e" stroke-width="1.4"/></svg>
<svg style="left:1486px;top:914px" width="21" height="13" viewBox="0 0 21 13"><path d="M0.8 2.5 L0.8 9.5 M0.8 6 L4 6 M17 6 L20.2 6 M20.2 2.5 L20.2 9.5" stroke="#6e6e6e" stroke-width="1.3"/><path d="M10.5 1 L17 12 L4 12 Z" fill="none" stroke="#6e6e6e" stroke-width="1.4" stroke-linejoin="round"/><circle cx="10.5" cy="8.3" r="1.4" fill="#6e6e6e"/></svg>
<svg style="left:1525px;top:912px" width="21" height="19" viewBox="0 0 21 19"><path d="M6 2.5 L0.75 2.5 L0.75 18.25 L20.25 18.25 L20.25 2.5 L15 2.5" fill="none" stroke="#6e6e6e" stroke-width="1.5"/><path d="M10.5 0 L10.5 11.5 M6.5 7.5 L10.5 11.5 L14.5 7.5" fill="none" stroke="#6e6e6e" stroke-width="1.5"/></svg>
<div class="a" style="left:377px;top:76px;width:373px;height:869px;background:#fafafa;"></div>
<div class="a" style="left:377px;top:76px;width:373px;height:830px;background:radial-gradient(ellipse 180px 120px at 240px 110px, rgba(0,0,0,0.035), rgba(0,0,0,0) 100%), radial-gradient(ellipse 200px 250px at 120px 350px, rgba(0,0,0,0.02), rgba(0,0,0,0) 100%);"></div>
<div class="a" style="left:749px;top:76px;width:1px;height:864px;background:#e2e2e2;"></div>
<svg style="left:386px;top:88.5px" width="8" height="12" viewBox="0 0 8 12"><path d="M1.5 1 L6.5 6 L1.5 11" fill="none" stroke="#707070" stroke-width="1.8" stroke-linecap="round" stroke-linejoin="round"/></svg>
<svg style="left:403px;top:84.5px" width="19" height="19" viewBox="0 0 19 19"><rect x="0.5" y="0.5" width="18" height="18" rx="2.5" fill="#f0b41c"/><path d="M3.5 4.5 L5.5 1 M7.5 4.5 L9.5 1 M11.5 4.5 L13.5 1 M15.5 4.5 L17 1.5" stroke="#fff" stroke-width="1.2"/><rect x="0.5" y="4.6" width="18" height="0.8" fill="#fff"/><path d="M4 8.5 L15 8.5 M4 11.5 L15 11.5 M4 14.5 L15 14.5" stroke="#fff" stroke-width="1.4"/></svg>
<div class="t" style="left:428.5px;top:87.0px;font-size:15.5px;color:#222;font-weight:bold;letter-spacing:0.03px;">Food Map Scene</div>
<div class="a" style="left:391px;top:118px;width:344px;height:1px;background:#bdbdbd;"></div>
<svg style="left:382.5px;top:129.5px" width="12" height="8" viewBox="0 0 12 8"><path d="M1 1.5 L6 6.5 L11 1.5" fill="none" stroke="#707070" stroke-width="1.8" stroke-linecap="round" stroke-linejoin="round"/></svg>
<svg style="left:403px;top:126px" width="19" height="19" viewBox="0 0 19 19"><rect x="1" y="1" width="17" height="17" rx="2.5" fill="#fff" stroke="#f0b41c" stroke-width="2"/><rect x="1" y="1" width="17" height="4.6" fill="#f0b41c"/><path d="M4 5.2 L6 1.6 M8 5.2 L10 1.6 M12 5.2 L14 1.6" stroke="#fff" stroke-width="1.2"/><rect x="5.5" y="9.7" width="8" height="3.6" fill="none" stroke="#f0b41c" stroke-width="1.4"/></svg>
<div class="t" style="left:428.5px;top:128.3px;font-size:15.5px;color:#222;font-weight:bold;letter-spacing:0.16px;">Map View Controller Scene</div>
<svg style="left:720.5px;top:129px" width="14" height="14" viewBox="0 0 14 14"><circle cx="7" cy="7" r="7" fill="#f2b31d"/><path d="M3.5 7 L10 7 M7 4 L10 7 L7 10" stroke="#fff" stroke-width="1.8" fill="none" stroke-linecap="round" stroke-linejoin="round"/></svg>
<svg style="left:404px;top:163px" width="12" height="8" viewBox="0 0 12 8"><path d="M1 1.5 L6 6.5 L11 1.5" fill="none" stroke="#707070" stroke-width="1.8" stroke-linecap="round" stroke-linejoin="round"/></svg>
<svg style="left:424.4px;top:155.5px" width="21.5" height="21.5" viewBox="0 0 21 21"><circle cx="10.5" cy="10.5" r="10.3" fill="#f2bd2a"/><rect x="5.2" y="5.2" width="10.6" height="10.6" rx="0.8" fill="#fff"/></svg>
<div class="t" style="left:450.5px;top:158.7px;font-size:15.5px;color:#222;letter-spacing:0.37px;">Map View Controller</div>
<svg style="left:427px;top:188px" width="12" height="8" viewBox="0 0 12 8"><path d="M1 1.5 L6 6.5 L11 1.5" fill="none" stroke="#707070" stroke-width="1.8" stroke-linecap="round" stroke-linejoin="round"/></svg>
<svg style="left:446px;top:180.5px" width="21.5" height="21.5" viewBox="0 0 21 21"><rect x="0" y="0" width="21" height="21" fill="#9a9a9f"/><rect x="4.3" y="4.3" width="12.4" height="12.4" fill="#fff"/></svg>
<div class="t" style="left:473px;top:183.5px;font-size:15.5px;color:#222;letter-spacing:0.06px;">View</div>
<svg style="left:468px;top:205px" width="22" height="22" viewBox="0 0 22 22"><rect x="0" y="0" width="22" height="22" fill="#9a9a9f"/><rect x="2.6" y="2.6" width="16.8" height="16.8" fill="#fff"/><rect x="5.2" y="5" width="11.6" height="12" fill="none" stroke="#9a9a9f" stroke-width="1.5"/><rect x="9" y="8.5" width="4" height="5" fill="#9a9a9f"/></svg>
<div class="t" style="left:495px;top:208.3px;font-size:15.5px;color:#222;letter-spacing:0.05px;">Safe Area</div>
<svg style="left:468px;top:230px" width="22" height="22" viewBox="0 0 22 22"><rect x="0" y="0" width="22" height="22" fill="#9a9a9f"/><rect x="2.6" y="2.6" width="16.8" height="16.8" fill="#fff"/><path d="M5 4 L7 7.5 M11.5 3 L12.5 7 L18 13 L19 18.5 M4 13 Q9 8.5 14 13 L16 18" stroke="#9a9a9f" stroke-width="2" fill="none"/><circle cx="9" cy="15" r="2.2" fill="none" stroke="#9a9a9f" stroke-width="1.3"/></svg>
<div class="t" style="left:495px;top:233.3px;font-size:15.5px;color:#222;letter-spacing:0.25px;">Map View</div>
<svg style="left:451px;top:257.5px" width="8" height="12" viewBox="0 0 8 12"><path d="M1.5 1 L6.5 6 L1.5 11" fill="none" stroke="#707070" stroke-width="1.8" stroke-linecap="round" stroke-linejoin="round"/></svg>
<svg style="left:468px;top:255px" width="22" height="22" viewBox="0 0 22 22"><rect x="0.6" y="0.6" width="20.8" height="20.8" fill="#fff" stroke="#7a7a7a" stroke-width="1.2"/><text x="11" y="16.5" font-size="15" text-anchor="middle" font-family="Liberation Sans" fill="#2f6ff0">B</text></svg>
<div class="t" style="left:495px;top:258.0px;font-size:15.5px;color:#222;letter-spacing:0.44px;">Button</div>
<svg style="left:449px;top:288px" width="12" height="8" viewBox="0 0 12 8"><path d="M1 1.5 L6 6.5 L11 1.5" fill="none" stroke="#707070" stroke-width="1.8" stroke-linecap="round" stroke-linejoin="round"/></svg>
<svg style="left:468px;top:280px" width="22" height="22" viewBox="0 0 22 22"><rect x="0.6" y="0.6" width="20.8" height="20.8" fill="#fff" stroke="#7a7a7a" stroke-width="1.2"/><text x="11" y="16.5" font-size="15" text-anchor="middle" font-family="Liberation Sans" fill="#2f6ff0">B</text></svg>
<div class="t" style="left:495px;top:283.0px;font-size:15.5px;color:#222;letter-spacing:0.44px;">Button</div>
<svg style="left:474.5px;top:307.5px" width="8" height="12" viewBox="0 0 8 12"><path d="M1.5 1 L6.5 6 L1.5 11" fill="none" stroke="#707070" stroke-width="1.8" stroke-linecap="round" stroke-linejoin="round"/></svg>
<svg style="left:492.5px;top:305.5px" width="20" height="20" viewBox="0 0 20 20"><rect x="0.5" y="0.5" width="19" height="19" rx="3" fill="#fff" stroke="#c8c8c8" stroke-width="1"/><rect x="2.8" y="2.8" width="14.4" height="14.4" fill="none" stroke="#2f6ff0" stroke-width="1.4"/><path d="M10 5 L10 8.3 M10 11.7 L10 15 M5 10 L8.3 10 M11.7 10 L15 10" stroke="#2f6ff0" stroke-width="1.2"/></svg>
<div class="t" style="left:517px;top:308.0px;font-size:15.5px;color:#222;letter-spacing:0.36px;">Constraints</div>
<div class="a" style="left:377px;top:328.5px;width:372px;height:24.5px;background:#dcdcdc;"></div>
<svg style="left:468px;top:335.5px" width="22" height="11" viewBox="0 0 22 11"><rect x="0.5" y="0.5" width="9.5" height="10" rx="1.5" fill="#fff" stroke="#d8d8d8" stroke-width="0.8"/><rect x="11.5" y="0.5" width="10" height="10" rx="1.5" fill="#f0f0f0"/><text x="5.2" y="8" font-size="6.5" text-anchor="middle" font-family="Liberation Sans" fill="#333">1</text><text x="16.5" y="8" font-size="6.5" text-anchor="middle" font-family="Liberation Sans" fill="#555">2</text></svg>
<div class="t" style="left:495px;top:333.0px;font-size:15.5px;color:#222;letter-spacing:0.20px;">Car, Walking</div>
<svg style="left:452.5px;top:357.5px" width="8" height="12" viewBox="0 0 8 12"><path d="M1.5 1 L6.5 6 L1.5 11" fill="none" stroke="#707070" stroke-width="1.8" stroke-linecap="round" stroke-linejoin="round"/></svg>
<svg style="left:470.5px;top:355.5px" width="20" height="20" viewBox="0 0 20 20"><rect x="0.5" y="0.5" width="19" height="19" rx="3" fill="#fff" stroke="#c8c8c8" stroke-width="1"/><rect x="2.8" y="2.8" width="14.4" height="14.4" fill="none" stroke="#2f6ff0" stroke-width="1.4"/><path d="M10 5 L10 8.3 M10 11.7 L10 15 M5 10 L8.3 10 M11.7 10 L15 10" stroke="#2f6ff0" stroke-width="1.2"/></svg>
<div class="t" style="left:495px;top:358.0px;font-size:15.5px;color:#222;letter-spacing:0.36px;">Constraints</div>
<svg style="left:424.5px;top:380px" width="21" height="22" viewBox="0 0 21 22"><path d="M10.5 0.5 L20 5.5 L20 16.5 L10.5 21.5 L1 16.5 L1 5.5 Z" fill="#e8962f"/><path d="M1 5.5 L10.5 10.5 L20 5.5 L10.5 0.5 Z" fill="#f0ac55"/><path d="M10.5 10.5 L10.5 21.5" stroke="#d9862a" stroke-width="0.8"/><text x="15.5" y="17" font-size="7.5" font-weight="bold" text-anchor="middle" font-family="Liberation Sans" fill="#fff">1</text><rect x="4" y="10.5" width="2.6" height="4.5" fill="none" stroke="#fff" stroke-width="1.1"/></svg>
<div class="t" style="left:450.5px;top:383.0px;font-size:15.5px;color:#222;letter-spacing:0.23px;">First Responder</div>
<svg style="left:424px;top:405px" width="22" height="22" viewBox="0 0 22 22"><rect x="0" y="0" width="22" height="22" fill="#eda33b"/><path d="M13 5 L5 5 L5 17 L13 17" fill="none" stroke="#fff" stroke-width="1.6"/><path d="M9 11 L18 11 M15 8 L18 11 L15 14" fill="none" stroke="#fff" stroke-width="1.6"/></svg>
<div class="t" style="left:450.5px;top:408.0px;font-size:15.5px;color:#222;letter-spacing:-0.11px;">Exit</div>
<svg style="left:425.5px;top:430.5px" width="19" height="19" viewBox="0 0 19 19"><path d="M15.3 4 A8 8 0 1 0 15.3 15" fill="none" stroke="#111" stroke-width="1.7"/><circle cx="8.3" cy="9.5" r="2.7" fill="#111"/><path d="M10 9.5 L18.5 9.5" stroke="#111" stroke-width="1.5"/></svg>
<div class="t" style="left:449px;top:433.0px;font-size:15.5px;color:#222;letter-spacing:0.14px;">Unwind segue to “unwindToHome...</div>
<div class="a" style="left:391px;top:458.5px;width:344px;height:1px;background:#bdbdbd;"></div>
<svg style="left:386px;top:470px" width="8" height="12" viewBox="0 0 8 12"><path d="M1.5 1 L6.5 6 L1.5 11" fill="none" stroke="#707070" stroke-width="1.8" stroke-linecap="round" stroke-linejoin="round"/></svg>
<svg style="left:403px;top:466px" width="19" height="19" viewBox="0 0 19 19"><rect x="0.5" y="0.5" width="18" height="18" rx="2.5" fill="#f0b41c"/><path d="M3.5 4.5 L5.5 1 M7.5 4.5 L9.5 1 M11.5 4.5 L13.5 1 M15.5 4.5 L17 1.5" stroke="#fff" stroke-width="1.2"/><rect x="0.5" y="4.6" width="18" height="0.8" fill="#fff"/><path d="M7 9 L15 9 L15 15 L7 15 L4.5 12 Z" fill="#fff"/></svg>
<div class="t" style="left:428.5px;top:469.0px;font-size:15.5px;color:#222;font-weight:bold;letter-spacing:0.11px;">Navigation Controller Scene</div>
<div class="a" style="left:384px;top:908px;width:358px;height:29px;background:#ececec;border:1px solid #d9d9d9;border-radius:8px;"></div>
<svg style="left:391px;top:913.5px" width="18" height="18" viewBox="0 0 18 18"><circle cx="9" cy="9" r="8" fill="none" stroke="#1a1a1a" stroke-width="1.5"/><path d="M5 6.5 L13 6.5 M6.3 9.3 L11.7 9.3 M7.6 12 L10.4 12" stroke="#1a1a1a" stroke-width="1.4"/></svg>
<div class="t" style="left:415px;top:915.0px;font-size:15.5px;color:#b4b4b4;letter-spacing:0.31px;">Filter</div>
<div class="a" style="left:377px;top:940px;width:373px;height:1px;background:#e0e0e0;"></div>
<div class="a" style="left:377px;top:941px;width:373px;height:4px;background:#fcfcfc;"></div>
<div class="a" style="left:1562px;top:0px;width:358px;height:945px;background:#efebef;"></div>
<div class="a" style="left:1561px;top:0px;width:1px;height:945px;background:#d9d5d9;"></div>
<div class="a" style="left:1562px;top:36px;width:358px;height:1px;background:#d2ced2;"></div>
<svg style="left:1612px;top:8.5px" width="14" height="18" viewBox="0 0 14 18"><path d="M1 2 Q1 0.75 2.2 0.75 L8.5 0.75 L13.25 5.5 L13.25 16 Q13.25 17.25 12 17.25 L2.2 17.25 Q1 17.25 1 16 Z" fill="none" stroke="#6b686b" stroke-width="1.4"/><path d="M8.5 0.75 L8.5 5.5 L13.25 5.5" fill="none" stroke="#6b686b" stroke-width="1.3"/></svg>
<svg style="left:1650.5px;top:8px" width="18" height="18" viewBox="0 0 18 18"><circle cx="9" cy="9" r="8.2" fill="none" stroke="#6b686b" stroke-width="1.4"/><path d="M9 4 L9 9.5 L5.5 9.5" fill="none" stroke="#6b686b" stroke-width="1.4"/></svg>
<svg style="left:1692px;top:8px" width="18" height="18" viewBox="0 0 18 18"><circle cx="9" cy="9" r="8.2" fill="none" stroke="#6b686b" stroke-width="1.4"/><path d="M6.5 7 Q6.5 4.5 9 4.5 Q11.5 4.5 11.5 6.8 Q11.5 8.3 9.8 9 Q9 9.4 9 10.8" fill="none" stroke="#6b686b" stroke-width="1.4"/><circle cx="9" cy="13.3" r="0.9" fill="#6b686b"/></svg>
<svg style="left:1733px;top:9.5px" width="19" height="15" viewBox="0 0 19 15"><rect x="0.75" y="0.75" width="17.5" height="13.5" rx="1.5" fill="none" stroke="#6b686b" stroke-width="1.4"/><rect x="3" y="3.3" width="5" height="5" fill="none" stroke="#6b686b" stroke-width="1.2"/><path d="M10 3.8 L16 3.8 M10 6.3 L16 6.3 M10 8.8 L16 8.8 M3 11.3 L16 11.3" stroke="#6b686b" stroke-width="1.1"/></svg>
<svg style="left:1775px;top:8.5px" width="19" height="18" viewBox="0 0 19 18"><path d="M0 3 L18 3 M0 9 L18 9 M0 15 L18 15" stroke="#2c6ef2" stroke-width="1.6"/><circle cx="13" cy="3" r="2.2" fill="#2c6ef2"/><circle cx="4.5" cy="9" r="2.2" fill="#2c6ef2"/><circle cx="12.5" cy="15" r="2.2" fill="#2c6ef2"/></svg>
<svg style="left:1816.5px;top:9.5px" width="17" height="17" viewBox="0 0 17 17"><path d="M1 0.8 L16.2 16.2 L1 16.2 Z" fill="none" stroke="#6b686b" stroke-width="1.4" stroke-linejoin="miter"/><path d="M4 8.5 L9 13.4 L4 13.4 Z" fill="none" stroke="#6b686b" stroke-width="1.2"/></svg>
<svg style="left:1858.5px;top:8.5px" width="18" height="18" viewBox="0 0 18 18"><path d="M15 4 A7.8 7.8 0 1 0 15 14" fill="none" stroke="#6b686b" stroke-width="1.4"/><circle cx="8.6" cy="9" r="2.6" fill="#6b686b"/><path d="M10 9 L17.8 9" stroke="#6b686b" stroke-width="1.4"/></svg>
<div class="t" style="left:1573px;top:45.3px;font-size:17px;color:#6c696c;font-weight:bold;letter-spacing:0.20px;">Segmented Control</div>
<div class="t" style="right:247.03px;top:83.8px;font-size:14px;color:#262426;letter-spacing:0.37px;">Style</div>
<div class="a" style="left:1680px;top:79.3px;width:233px;height:22.2px;background:#fff;border-radius:5px;box-shadow:0 0 0 0.5px rgba(0,0,0,0.08),0 1px 1.5px rgba(0,0,0,0.18);"></div>
<svg style="left:1894px;top:82.39999999999999px" width="16" height="16" viewBox="0 0 16 16"><rect x="0" y="0" width="16" height="16" rx="4" fill="#3a7bf6"/><path d="M5 6.5 L8 3.8 L11 6.5 M5 9.5 L8 12.2 L11 9.5" fill="none" stroke="#fff" stroke-width="1.5" stroke-linecap="round" stroke-linejoin="round"/></svg>
<div class="t" style="left:1689px;top:83.4px;font-size:14px;color:#262426;letter-spacing:0.97px;">Plain</div>
<svg style="left:1571px;top:113px" width="9" height="10" viewBox="0 0 9 10"><path d="M4.5 0 L4.5 10 M0 5 L9 5" stroke="#8a878a" stroke-width="1.2"/></svg>
<div class="t" style="right:246.86px;top:112.6px;font-size:14px;color:#262426;letter-spacing:0.54px;">Selected Tint</div>
<div class="a" style="left:1680px;top:108px;width:233px;height:22.4px;background:#fff;border-radius:5px;box-shadow:0 0 0 0.5px rgba(0,0,0,0.08),0 1px 1.5px rgba(0,0,0,0.18);"></div>
<svg style="left:1894px;top:111.2px" width="16" height="16" viewBox="0 0 16 16"><rect x="0" y="0" width="16" height="16" rx="4" fill="#3a7bf6"/><path d="M5 6.5 L8 3.8 L11 6.5 M5 9.5 L8 12.2 L11 9.5" fill="none" stroke="#fff" stroke-width="1.5" stroke-linecap="round" stroke-linejoin="round"/></svg>
<div class="t" style="left:1733px;top:112.3px;font-size:14px;color:#262426;letter-spacing:1.11px;">Default</div>
<svg style="left:1689px;top:114px" width="38" height="10.5" viewBox="0 0 38 10.5"><rect x="0.5" y="0.5" width="37" height="9.5" fill="#fff" stroke="#d8d8d8" stroke-width="0.8"/><path d="M0.5 10 L37.5 0.5" stroke="#e8706a" stroke-width="1"/></svg>
<div class="t" style="right:247.45px;top:141.8px;font-size:14px;color:#262426;letter-spacing:-0.05px;">State</div>
<svg style="left:1680.5px;top:140.2px" width="16" height="16" viewBox="0 0 16 16"><rect x="0.5" y="0.5" width="15" height="15" rx="3.5" fill="#fff" stroke="#d9d5d9" stroke-width="0.9"/></svg>
<div class="t" style="left:1703px;top:141.8px;font-size:14px;color:#262426;letter-spacing:1.31px;">Momentary</div>
<div class="t" style="right:247.05px;top:166.8px;font-size:14px;color:#262426;letter-spacing:0.35px;">Drag and Drop</div>
<svg style="left:1680.5px;top:165.2px" width="16" height="16" viewBox="0 0 16 16"><rect x="0.5" y="0.5" width="15" height="15" rx="3.5" fill="#fff" stroke="#d9d5d9" stroke-width="0.9"/></svg>
<div class="t" style="left:1703px;top:166.8px;font-size:14px;color:#262426;letter-spacing:0.41px;">Spring Loaded</div>
<div class="t" style="right:247.55px;top:195.6px;font-size:14px;color:#262426;letter-spacing:-0.15px;">Segments</div>
<div class="a" style="left:1680px;top:190.7px;width:215.29999999999995px;height:23.3px;background:#fff;box-shadow:0 1px 0 rgba(0,0,0,0.12),0 0 0 0.5px rgba(0,0,0,0.05);"></div>
<div class="t" style="right:28.99px;top:195.9px;font-size:14px;color:#262426;letter-spacing:0.71px;">2</div>
<svg style="left:1897.8px;top:191px" width="15.5" height="24.3" viewBox="0 0 15.5 24.3"><rect x="0.5" y="0.5" width="14.5" height="23.3" rx="5" fill="#fff" stroke="#dcd8dc" stroke-width="0.8"/><path d="M0.5 12.15 L15 12.15" stroke="#ebe7eb" stroke-width="0.8"/><path d="M4 7.65 L7.75 4.15 L11.5 7.65 M4 16.65 L7.75 20.15 L11.5 16.65" fill="none" stroke="#333" stroke-width="1.3" stroke-linecap="round" stroke-linejoin="round"/></svg>
<div class="a" style="left:1573px;top:222.5px;width:339px;height:1px;background:#d6d2d6;"></div>
<div class="t" style="right:247.07px;top:234.6px;font-size:14px;color:#262426;letter-spacing:0.33px;">Segment</div>
<div class="a" style="left:1680px;top:229.6px;width:233px;height:23px;background:#fff;border-radius:5px;box-shadow:0 0 0 0.5px rgba(0,0,0,0.08),0 1px 1.5px rgba(0,0,0,0.18);"></div>
<svg style="left:1894px;top:233.1px" width="16" height="16" viewBox="0 0 16 16"><rect x="0" y="0" width="16" height="16" rx="4" fill="#3a7bf6"/><path d="M5 6.5 L8 3.8 L11 6.5 M5 9.5 L8 12.2 L11 9.5" fill="none" stroke="#fff" stroke-width="1.5" stroke-linecap="round" stroke-linejoin="round"/></svg>
<div class="t" style="left:1689px;top:234.5px;font-size:14px;color:#262426;letter-spacing:0.86px;">Segment 1 – Walking</div>
<div class="t" style="right:246.88px;top:266.2px;font-size:14px;color:#262426;letter-spacing:0.52px;">Title</div>
<div class="a" style="left:1680px;top:261.5px;width:232px;height:22.9px;background:#fff;box-shadow:0 1px 0 rgba(0,0,0,0.12),0 0 0 0.5px rgba(0,0,0,0.05);"></div>
<div class="t" style="left:1685px;top:266.3px;font-size:14px;color:#262426;letter-spacing:1.04px;">Walking</div>
<div class="t" style="right:247.38px;top:297.2px;font-size:14px;color:#262426;letter-spacing:0.02px;">Image</div>
<div class="a" style="left:1680px;top:292.6px;width:233px;height:22.4px;background:#fff;border-radius:5px;box-shadow:0 0 0 0.5px rgba(0,0,0,0.08),0 1px 1.5px rgba(0,0,0,0.18);"></div>
<svg style="left:1894px;top:295.8px" width="16" height="16" viewBox="0 0 16 16"><rect x="0" y="0" width="16" height="16" rx="4" fill="#3a7bf6"/><path d="M5 6.5 L8 9.3 L11 6.5" fill="none" stroke="#fff" stroke-width="1.6" stroke-linecap="round" stroke-linejoin="round"/></svg>
<div class="t" style="left:1685px;top:296.9px;font-size:14px;color:#b9b6b9;letter-spacing:1.02px;">Image</div>
<div class="t" style="right:247.12px;top:326.3px;font-size:14px;color:#262426;letter-spacing:0.28px;">Behavior</div>
<svg style="left:1680.6px;top:324.6px" width="16" height="16" viewBox="0 0 16 16"><rect x="0" y="0" width="16" height="16" rx="3.5" fill="#3a7bf6"/><path d="M3.8 8.3 L6.8 11.5 L12.3 4.5" fill="none" stroke="#fff" stroke-width="1.9" stroke-linecap="round" stroke-linejoin="round"/></svg>
<div class="t" style="left:1703.4px;top:326.3px;font-size:14px;color:#262426;letter-spacing:0.94px;">Enabled</div>
<svg style="left:1802.3px;top:324.6px" width="16" height="16" viewBox="0 0 16 16"><rect x="0.5" y="0.5" width="15" height="15" rx="3.5" fill="#fff" stroke="#d9d5d9" stroke-width="0.9"/></svg>
<div class="t" style="left:1825px;top:326.3px;font-size:14px;color:#262426;letter-spacing:1.19px;">Selected</div>
<div class="t" style="right:246.82px;top:354.8px;font-size:14px;color:#262426;letter-spacing:0.58px;">Content Offset</div>
<div class="a" style="left:1680.5px;top:350.3px;width:91.5px;height:23.4px;background:#fff;box-shadow:0 1px 0 rgba(0,0,0,0.12),0 0 0 0.5px rgba(0,0,0,0.05);"></div>
<div class="t" style="right:152.29px;top:355.6px;font-size:14px;color:#262426;letter-spacing:0.71px;">0</div>
<svg style="left:1774.7px;top:350.5px" width="15.5" height="24" viewBox="0 0 15.5 24"><rect x="0.5" y="0.5" width="14.5" height="23" rx="5" fill="#fff" stroke="#dcd8dc" stroke-width="0.8"/><path d="M0.5 12.0 L15 12.0" stroke="#ebe7eb" stroke-width="0.8"/><path d="M4 7.5 L7.75 4.0 L11.5 7.5 M4 16.5 L7.75 20.0 L11.5 16.5" fill="none" stroke="#333" stroke-width="1.3" stroke-linecap="round" stroke-linejoin="round"/></svg>
<div class="a" style="left:1802px;top:350.3px;width:93.09999999999991px;height:23.4px;background:#fff;box-shadow:0 1px 0 rgba(0,0,0,0.12),0 0 0 0.5px rgba(0,0,0,0.05);"></div>
<div class="t" style="right:29.19px;top:355.6px;font-size:14px;color:#262426;letter-spacing:0.71px;">0</div>
<svg style="left:1897.8px;top:350.5px" width="15.5" height="24" viewBox="0 0 15.5 24"><rect x="0.5" y="0.5" width="14.5" height="23" rx="5" fill="#fff" stroke="#dcd8dc" stroke-width="0.8"/><path d="M0.5 12.0 L15 12.0" stroke="#ebe7eb" stroke-width="0.8"/><path d="M4 7.5 L7.75 4.0 L11.5 7.5 M4 16.5 L7.75 20.0 L11.5 16.5" fill="none" stroke="#333" stroke-width="1.3" stroke-linecap="round" stroke-linejoin="round"/></svg>
<div class="t" style="left:1426.00px;width:600px;text-align:center;top:375.6px;font-size:13px;color:#262426;">X</div>
<div class="t" style="left:1548.80px;width:600px;text-align:center;top:375.6px;font-size:13px;color:#262426;">Y</div>
<div class="a" style="left:1573px;top:409.4px;width:339px;height:1px;background:#d6d2d6;"></div>
<div class="t" style="left:1573px;top:419.5px;font-size:17px;color:#6c696c;font-weight:bold;letter-spacing:0.05px;">Control</div>
<div class="t" style="right:246.88px;top:458.1px;font-size:14px;color:#262426;letter-spacing:0.72px;">Alignment</div>
<div class="a" style="left:1679.4px;top:452.1px;width:226.3px;height:24.1px;background:#e2dee2;border-radius:7px;"></div>
<div class="a" style="left:1714.7px;top:453.3px;width:37.3px;height:22.4px;background:#fff;border-radius:6px;box-shadow:0 0.5px 1.5px rgba(0,0,0,0.18);"></div>
<svg style="left:1688.5px;top:454px" width="17" height="21" viewBox="0 0 17 21"><path d="M1 0.5 L1 20.5" stroke="#1d1d1d" stroke-width="1.3"/><rect x="1" y="3.3" width="14.5" height="14.5" fill="none" stroke="#1d1d1d" stroke-width="1.2"/><text x="7.5" y="13.5" font-size="8" font-weight="bold" font-family="Liberation Sans" fill="#1d1d1d">L</text></svg>
<svg style="left:1726px;top:454px" width="17" height="21" viewBox="0 0 17 21"><path d="M1 0.5 L1 20.5" stroke="#1d1d1d" stroke-width="1.3"/><rect x="1" y="3.3" width="14.5" height="14.5" fill="none" stroke="#1d1d1d" stroke-width="1.2"/></svg>
<svg style="left:1764.5px;top:454px" width="17" height="21" viewBox="0 0 17 21"><path d="M8 0.5 L8 20.5" stroke="#1d1d1d" stroke-width="1.3"/><rect x="0.7" y="3.3" width="14.5" height="14.5" fill="none" stroke="#1d1d1d" stroke-width="1.2"/></svg>
<div class="a" style="left:1792px;top:458px;width:1px;height:12px;background:#cfcbcf;"></div>
<svg style="left:1803.5px;top:454px" width="17" height="21" viewBox="0 0 17 21"><path d="M14.5 0.5 L14.5 20.5" stroke="#1d1d1d" stroke-width="1.3"/><rect x="0.7" y="3.3" width="14.5" height="14.5" fill="none" stroke="#1d1d1d" stroke-width="1.2"/><text x="4.3" y="13.5" font-size="8" font-weight="bold" font-family="Liberation Sans" fill="#1d1d1d">T</text></svg>
<div class="a" style="left:1830.5px;top:458px;width:1px;height:12px;background:#cfcbcf;"></div>
<svg style="left:1842px;top:454px" width="17" height="21" viewBox="0 0 17 21"><path d="M15 0.5 L15 20.5" stroke="#1d1d1d" stroke-width="1.3"/><rect x="0.7" y="3.3" width="14.5" height="14.5" fill="none" stroke="#1d1d1d" stroke-width="1.2"/></svg>
<div class="a" style="left:1869.5px;top:458px;width:1px;height:12px;background:#cfcbcf;"></div>
<svg style="left:1880px;top:454px" width="17" height="21" viewBox="0 0 17 21"><rect x="0.7" y="3.3" width="15" height="14.5" fill="none" stroke="#1d1d1d" stroke-width="1.2"/><path d="M3 10.5 L13.5 10.5 M5.5 8 L3 10.5 L5.5 13 M11 8 L13.5 10.5 L11 13" fill="none" stroke="#1d1d1d" stroke-width="1.1"/></svg>
<div class="t" style="left:1495.77px;width:600px;text-align:center;top:481.9px;font-size:13px;color:#262426;letter-spacing:0.94px;">Horizontal</div>
<div class="a" style="left:1679.4px;top:500.5px;width:232.1px;height:24.1px;background:#e2dee2;border-radius:7px;"></div>
<div class="a" style="left:1680.5px;top:501.7px;width:53.5px;height:22px;background:#fff;border-radius:6px;box-shadow:0 0.5px 1.5px rgba(0,0,0,0.18);"></div>
<svg style="left:1697px;top:505px" width="21" height="15" viewBox="0 0 21 15"><path d="M0.5 0.7 L20.5 0.7" stroke="#1d1d1d" stroke-width="1.3"/><rect x="2.8" y="0.7" width="14.5" height="14" fill="none" stroke="#1d1d1d" stroke-width="1.2"/></svg>
<svg style="left:1754.5px;top:505px" width="21" height="15" viewBox="0 0 21 15"><path d="M0.5 7.5 L20.5 7.5" stroke="#1d1d1d" stroke-width="1.3"/><rect x="2.8" y="0.7" width="14.5" height="14" fill="none" stroke="#1d1d1d" stroke-width="1.2"/></svg>
<div class="a" style="left:1794.5px;top:507px;width:1px;height:12px;background:#cfcbcf;"></div>
<svg style="left:1814px;top:505px" width="21" height="15" viewBox="0 0 21 15"><path d="M0.5 14.5 L20.5 14.5" stroke="#1d1d1d" stroke-width="1.3"/><rect x="2.8" y="0.7" width="14.5" height="14" fill="none" stroke="#1d1d1d" stroke-width="1.2"/></svg>
<div class="a" style="left:1854px;top:507px;width:1px;height:12px;background:#cfcbcf;"></div>
<svg style="left:1875px;top:505px" width="21" height="15" viewBox="0 0 21 15"><rect x="0.7" y="0.7" width="15" height="14" fill="none" stroke="#1d1d1d" stroke-width="1.2"/><path d="M8.2 2.5 L8.2 12.8 M5.8 4.8 L8.2 2.5 L10.6 4.8 M5.8 10.5 L8.2 12.8 L10.6 10.5" fill="none" stroke="#1d1d1d" stroke-width="1.1"/></svg>
<div class="t" style="left:1495.49px;width:600px;text-align:center;top:530.1px;font-size:13px;color:#262426;letter-spacing:0.98px;">Vertical</div>
<div class="a" style="left:1573px;top:549.1px;width:339px;height:1px;background:#d6d2d6;"></div>
<div class="t" style="right:247.11px;top:558.9px;font-size:14px;color:#262426;letter-spacing:0.49px;">Menu</div>
<svg style="left:1680.5px;top:557.6px" width="16" height="16" viewBox="0 0 16 16"><rect x="0.5" y="0.5" width="15" height="15" rx="3.5" fill="#fff" stroke="#d9d5d9" stroke-width="0.9"/></svg>
<div class="t" style="left:1703px;top:558.9px;font-size:14px;color:#262426;letter-spacing:1.04px;">Shows as Primary Action</div>
<div class="a" style="left:1573px;top:581.5px;width:339px;height:1px;background:#d6d2d6;"></div>
<div class="t" style="right:247.65px;top:590.7px;font-size:14px;color:#262426;letter-spacing:-0.05px;">State</div>
<svg style="left:1680.5px;top:589.2px" width="16" height="16" viewBox="0 0 16 16"><rect x="0.5" y="0.5" width="15" height="15" rx="3.5" fill="#fff" stroke="#d9d5d9" stroke-width="0.9"/></svg>
<div class="t" style="left:1703px;top:590.7px;font-size:14px;color:#262426;letter-spacing:1.19px;">Selected</div>
<svg style="left:1680.5px;top:614.2px" width="16" height="16" viewBox="0 0 16 16"><rect x="0" y="0" width="16" height="16" rx="3.5" fill="#3a7bf6"/><path d="M3.8 8.3 L6.8 11.5 L12.3 4.5" fill="none" stroke="#fff" stroke-width="1.9" stroke-linecap="round" stroke-linejoin="round"/></svg>
<div class="t" style="left:1703px;top:615.2px;font-size:14px;color:#262426;letter-spacing:0.94px;">Enabled</div>
<svg style="left:1680.5px;top:639.2px" width="16" height="16" viewBox="0 0 16 16"><rect x="0.5" y="0.5" width="15" height="15" rx="3.5" fill="#fff" stroke="#d9d5d9" stroke-width="0.9"/></svg>
<div class="t" style="left:1703px;top:640.2px;font-size:14px;color:#262426;letter-spacing:1.20px;">Highlighted</div>
<div class="a" style="left:1573px;top:663px;width:339px;height:1px;background:#d6d2d6;"></div>
<div class="t" style="right:246.84px;top:676.2px;font-size:14px;color:#262426;letter-spacing:0.76px;">Tooltip</div>
<div class="a" style="left:1680px;top:672px;width:231.70000000000005px;height:22.3px;background:#fff;box-shadow:0 1px 0 rgba(0,0,0,0.12),0 0 0 0.5px rgba(0,0,0,0.05);"></div>
<div class="t" style="left:1685px;top:676.2px;font-size:14px;color:#b9b6b9;letter-spacing:1.26px;">Tooltip</div>
<div class="a" style="left:1573px;top:713px;width:339px;height:1px;background:#d6d2d6;"></div>
<div class="t" style="right:247.27px;top:760.7px;font-size:14px;color:#262426;letter-spacing:0.33px;">Mode</div>
<div class="a" style="left:1680px;top:757px;width:233px;height:21.7px;background:#fff;border-radius:5px;box-shadow:0 0 0 0.5px rgba(0,0,0,0.08),0 1px 1.5px rgba(0,0,0,0.18);"></div>
<svg style="left:1894px;top:759.85px" width="16" height="16" viewBox="0 0 16 16"><rect x="0" y="0" width="16" height="16" rx="4" fill="#3a7bf6"/><path d="M5 6.5 L8 3.8 L11 6.5 M5 9.5 L8 12.2 L11 9.5" fill="none" stroke="#fff" stroke-width="1.5" stroke-linecap="round" stroke-linejoin="round"/></svg>
<div class="t" style="left:1689px;top:760.6px;font-size:14px;color:#262426;letter-spacing:0.82px;">Scale To Fill</div>
<div class="t" style="right:247.37px;top:791.6px;font-size:14px;color:#262426;letter-spacing:0.23px;">Semantic</div>
<div class="a" style="left:1680px;top:787.4px;width:233px;height:21.6px;background:#fff;border-radius:5px;box-shadow:0 0 0 0.5px rgba(0,0,0,0.08),0 1px 1.5px rgba(0,0,0,0.18);"></div>
<svg style="left:1894px;top:790.1999999999999px" width="16" height="16" viewBox="0 0 16 16"><rect x="0" y="0" width="16" height="16" rx="4" fill="#3a7bf6"/><path d="M5 6.5 L8 3.8 L11 6.5 M5 9.5 L8 12.2 L11 9.5" fill="none" stroke="#fff" stroke-width="1.5" stroke-linecap="round" stroke-linejoin="round"/></svg>
<div class="t" style="left:1689px;top:790.9px;font-size:14px;color:#262426;letter-spacing:1.18px;">Unspecified</div>
<div class="t" style="right:247.14px;top:823.8px;font-size:14px;color:#262426;letter-spacing:0.46px;">Tag</div>
<div class="a" style="left:1680px;top:818.8px;width:215px;height:22.4px;background:#fff;box-shadow:0 1px 0 rgba(0,0,0,0.12),0 0 0 0.5px rgba(0,0,0,0.05);"></div>
<div class="t" style="right:29.29px;top:823.1px;font-size:14px;color:#262426;letter-spacing:0.71px;">0</div>
<svg style="left:1897.8px;top:818.5px" width="15.5" height="23.5" viewBox="0 0 15.5 23.5"><rect x="0.5" y="0.5" width="14.5" height="22.5" rx="5" fill="#fff" stroke="#dcd8dc" stroke-width="0.8"/><path d="M0.5 11.75 L15 11.75" stroke="#ebe7eb" stroke-width="0.8"/><path d="M4 7.25 L7.75 3.75 L11.5 7.25 M4 16.25 L7.75 19.75 L11.5 16.25" fill="none" stroke="#333" stroke-width="1.3" stroke-linecap="round" stroke-linejoin="round"/></svg>
<div class="a" style="left:1573px;top:849.6px;width:339px;height:1px;background:#d6d2d6;"></div>
<div class="t" style="right:246.94px;top:858.8px;font-size:14px;color:#262426;letter-spacing:0.66px;">Interaction</div>
<svg style="left:1680.5px;top:858px" width="16" height="16" viewBox="0 0 16 16"><rect x="0" y="0" width="16" height="16" rx="3.5" fill="#3a7bf6"/><path d="M3.8 8.3 L6.8 11.5 L12.3 4.5" fill="none" stroke="#fff" stroke-width="1.9" stroke-linecap="round" stroke-linejoin="round"/></svg>
<div class="t" style="left:1703px;top:858.8px;font-size:14px;color:#262426;letter-spacing:1.00px;">User Interaction Enabled</div>
<svg style="left:1680.5px;top:883px" width="16" height="16" viewBox="0 0 16 16"><rect x="0.5" y="0.5" width="15" height="15" rx="3.5" fill="#fff" stroke="#d9d5d9" stroke-width="0.9"/></svg>
<div class="t" style="left:1703px;top:884.1px;font-size:14px;color:#262426;letter-spacing:1.14px;">Multiple Touch</div>
<div class="a" style="left:1573px;top:906.5px;width:339px;height:1px;background:#d6d2d6;"></div>
<div class="t" style="right:247.30px;top:920.5px;font-size:14px;color:#262426;letter-spacing:0.30px;">Alpha</div>
<div class="a" style="left:1680px;top:915.5px;width:215px;height:22.5px;background:#fff;box-shadow:0 1px 0 rgba(0,0,0,0.12),0 0 0 0.5px rgba(0,0,0,0.05);"></div>
<div class="t" style="right:31.79px;top:919.9px;font-size:14px;color:#262426;letter-spacing:-1.79px;">1</div>
<svg style="left:1897.8px;top:915.5px" width="15.5" height="23" viewBox="0 0 15.5 23"><rect x="0.5" y="0.5" width="14.5" height="22" rx="5" fill="#fff" stroke="#dcd8dc" stroke-width="0.8"/><path d="M0.5 11.5 L15 11.5" stroke="#ebe7eb" stroke-width="0.8"/><path d="M4 7.0 L7.75 3.5 L11.5 7.0 M4 16.0 L7.75 19.5 L11.5 16.0" fill="none" stroke="#333" stroke-width="1.3" stroke-linecap="round" stroke-linejoin="round"/></svg>
<svg style="left:0;top:0;filter:drop-shadow(0 6px 14px rgba(0,0,0,0.22)) drop-shadow(0 0 1px rgba(0,0,0,0.35))" width="1920" height="945" viewBox="0 0 1920 945"><path d="M1292 441.5 L1631 441.5 Q1646 441.5 1646 456.5 L1646 871.5 Q1646 886.5 1631 886.5 L1482 886.5 Q1476 886.5 1472 891.5 L1463 902.0 Q1461 904.0 1459 902.0 L1450 891.5 Q1446 886.5 1440 886.5 L1292 886.5 Q1277 886.5 1277 871.5 L1277 456.5 Q1277 441.5 1292 441.5 Z" fill="#eeeaee"/></svg>
<div class="t" style="left:1292px;top:457.9px;font-size:15.5px;color:#1e1e1e;font-weight:bold;letter-spacing:0.25px;">Add New Constraints</div>
<div class="a" style="left:1410.5px;top:485px;width:102px;height:30px;background:#87a9ee;border-radius:6px;"></div>
<div class="a" style="left:1414.9px;top:490px;width:93.1px;height:19.8px;background:#e0dce0;"></div>
<div class="a" style="left:1418.4px;top:491.2px;width:29.2px;height:18px;background:#a9c4f0;"></div>
<div class="t" style="left:1419px;top:493.0px;font-size:16px;color:#1e1e1e;letter-spacing:0.15px;">658</div>
<svg style="left:1495.5px;top:498.5px" width="8" height="5" viewBox="0 0 8 5"><path d="M0.8 0.8 L4 4 L7.2 0.8" fill="none" stroke="#333" stroke-width="1.3" stroke-linecap="round" stroke-linejoin="round"/></svg>
<div class="a" style="left:1327px;top:541.2px;width:93.70000000000005px;height:21.799999999999955px;background:#e0dce0;"></div>
<div class="t" style="left:1332px;top:544.3px;font-size:16px;color:#1e1e1e;letter-spacing:0.65px;">240</div>
<svg style="left:1407.7px;top:549.6px" width="8" height="5" viewBox="0 0 8 5"><path d="M0.8 0.8 L4 4 L7.2 0.8" fill="none" stroke="#333" stroke-width="1.3" stroke-linecap="round" stroke-linejoin="round"/></svg>
<div class="a" style="left:1501.9px;top:541.2px;width:93.89999999999986px;height:21.799999999999955px;background:#e0dce0;"></div>
<div class="t" style="left:1506.9px;top:544.3px;font-size:16px;color:#1e1e1e;">13</div>
<svg style="left:1582.8px;top:549.6px" width="8" height="5" viewBox="0 0 8 5"><path d="M0.8 0.8 L4 4 L7.2 0.8" fill="none" stroke="#333" stroke-width="1.3" stroke-linecap="round" stroke-linejoin="round"/></svg>
<div class="a" style="left:1414.9px;top:593.1px;width:93.84999999999991px;height:21.799999999999955px;background:#e0dce0;"></div>
<div class="t" style="left:1419.9px;top:596.2px;font-size:16px;color:#1e1e1e;">0</div>
<svg style="left:1495.75px;top:601.5px" width="8" height="5" viewBox="0 0 8 5"><path d="M0.8 0.8 L4 4 L7.2 0.8" fill="none" stroke="#333" stroke-width="1.3" stroke-linecap="round" stroke-linejoin="round"/></svg>
<svg style="left:1450px;top:540.4px" width="23" height="22.4" viewBox="0 0 23 22.4"><rect x="0.75" y="0.75" width="21" height="20.9" fill="#ececec" stroke="#8a8a8a" stroke-width="1.5"/></svg>
<svg style="left:1455px;top:516.5px" width="14" height="20" viewBox="0 0 14 20"><path d="M0.5 1 L13 1 M0.5 18.7 L13 18.7 M6.7 2.5 L6.7 17" fill="none" stroke="#f08a8a" stroke-width="1.2" stroke-dasharray="2.5 2"/></svg>
<svg style="left:1426.5px;top:544.5px" width="21" height="19" viewBox="0 0 21 19"><path d="M1 0.5 L1 18 M19.3 0.5 L19.3 18 M2.5 7 L18 7" fill="none" stroke="#f08a8a" stroke-width="1.2" stroke-dasharray="2.5 2"/></svg>
<svg style="left:1476.5px;top:545px" width="20" height="13" viewBox="0 0 20 13"><path d="M1 0 L1 12.6 M19 0 L19 12.6 M1 6.4 L19 6.4" fill="none" stroke="#e8131d" stroke-width="1.6"/></svg>
<svg style="left:1455px;top:566.5px" width="13" height="20" viewBox="0 0 13 20"><path d="M0 0.8 L12.6 0.8 M0 19 L12.6 19 M6.3 0.8 L6.3 19" fill="none" stroke="#e8131d" stroke-width="1.6"/></svg>
<div class="t" style="left:1162.28px;width:600px;text-align:center;top:625.3px;font-size:16px;color:#1e1e1e;letter-spacing:0.15px;">Spacing to nearest neighbor</div>
<div class="a" style="left:1372px;top:654.1px;width:16.7px;height:16.2px;background:#d5d1d5;border-radius:4px;"></div>
<div class="t" style="left:1394.6px;top:655.1px;font-size:16px;color:#1e1e1e;letter-spacing:0.10px;">Constrain to margins</div>
<div class="a" style="left:1286px;top:678px;width:350px;height:1px;background:#d2ced2;"></div>
<div class="a" style="left:1291px;top:689.2px;width:16.8px;height:16.2px;background:#d5d1d5;border-radius:4px;"></div>
<svg style="left:1313px;top:686.9px;" width="21" height="21" viewBox="0 0 21 21"><rect x="0.5" y="0.5" width="20" height="20" rx="4" fill="#fff" stroke="#b8b5b8" stroke-width="0.9"/><rect x="2.8" y="2.8" width="15.4" height="15.4" fill="none" stroke="#1f5ff0" stroke-width="1.4"/><path d="M6 6.5 L6 14.5 M15 6.5 L15 14.5 M6 10.5 L15 10.5" stroke="#1f5ff0" stroke-width="1.3"/></svg>
<div class="t" style="left:1340.3px;top:691.3px;font-size:16px;color:#1e1e1e;letter-spacing:0.10px;">Width</div>
<div class="a" style="left:1535.7px;top:687.5px;width:94.59999999999991px;height:21.799999999999955px;background:#e0dce0;"></div>
<div class="t" style="left:1540.7px;top:690.6px;font-size:16px;color:#1e1e1e;letter-spacing:-0.35px;">137</div>
<svg style="left:1617.3px;top:695.9px" width="8" height="5" viewBox="0 0 8 5"><path d="M0.8 0.8 L4 4 L7.2 0.8" fill="none" stroke="#333" stroke-width="1.3" stroke-linecap="round" stroke-linejoin="round"/></svg>
<div class="a" style="left:1291px;top:718.2px;width:16.8px;height:16.2px;background:#d5d1d5;border-radius:4px;"></div>
<svg style="left:1313px;top:715.9px;" width="21" height="21" viewBox="0 0 21 21"><rect x="0.5" y="0.5" width="20" height="20" rx="4" fill="#fff" stroke="#b8b5b8" stroke-width="0.9"/><rect x="2.8" y="2.8" width="15.4" height="15.4" fill="none" stroke="#1f5ff0" stroke-width="1.4"/><path d="M6.5 6 L14.5 6 M6.5 15 L14.5 15 M10.5 6 L10.5 15" stroke="#1f5ff0" stroke-width="1.3"/></svg>
<div class="t" style="left:1340.3px;top:720.3px;font-size:16px;color:#1e1e1e;letter-spacing:0.09px;">Height</div>
<div class="a" style="left:1535.7px;top:716.6px;width:94.59999999999991px;height:21.799999999999955px;background:#e0dce0;"></div>
<div class="t" style="left:1540.7px;top:719.7px;font-size:16px;color:#1e1e1e;">31</div>
<svg style="left:1617.3px;top:725.0px" width="8" height="5" viewBox="0 0 8 5"><path d="M0.8 0.8 L4 4 L7.2 0.8" fill="none" stroke="#333" stroke-width="1.3" stroke-linecap="round" stroke-linejoin="round"/></svg>
<div class="a" style="left:1286px;top:746px;width:350px;height:1px;background:#d2ced2;"></div>
<div class="a" style="left:1291px;top:756.9px;width:16.8px;height:16.2px;background:#e1dde1;border-radius:4px;"></div>
<svg style="left:1313px;top:754.6px;opacity:0.45;" width="21" height="21" viewBox="0 0 21 21"><rect x="0.5" y="0.5" width="20" height="20" rx="4" fill="#fff" stroke="#b8b5b8" stroke-width="0.9"/><rect x="2.8" y="3" width="15.4" height="6.3" fill="none" stroke="#1f5ff0" stroke-width="1.3"/><rect x="2.8" y="11.7" width="15.4" height="6.3" fill="none" stroke="#1f5ff0" stroke-width="1.3"/></svg>
<div class="t" style="left:1340.3px;top:759.0px;font-size:16px;color:#a9a6a9;letter-spacing:-0.05px;">Equal Widths</div>
<div class="a" style="left:1291px;top:786.3px;width:16.8px;height:16.2px;background:#e1dde1;border-radius:4px;"></div>
<svg style="left:1313px;top:784.0px;opacity:0.45;" width="21" height="21" viewBox="0 0 21 21"><rect x="0.5" y="0.5" width="20" height="20" rx="4" fill="#fff" stroke="#b8b5b8" stroke-width="0.9"/><rect x="3" y="2.8" width="6.3" height="15.4" fill="none" stroke="#1f5ff0" stroke-width="1.3"/><rect x="11.7" y="2.8" width="6.3" height="15.4" fill="none" stroke="#1f5ff0" stroke-width="1.3"/></svg>
<div class="t" style="left:1340.3px;top:788.4px;font-size:16px;color:#a9a6a9;letter-spacing:-0.06px;">Equal Heights</div>
<div class="a" style="left:1291px;top:814.9px;width:16.8px;height:16.2px;background:#d5d1d5;border-radius:4px;"></div>
<svg style="left:1313px;top:812.6px;" width="21" height="21" viewBox="0 0 21 21"><rect x="0.5" y="0.5" width="20" height="20" rx="4" fill="#fff" stroke="#b8b5b8" stroke-width="0.9"/><rect x="2.8" y="2.8" width="15.4" height="15.4" fill="none" stroke="#1f5ff0" stroke-width="1.4"/><path d="M7.5 18 L7.5 8 L18 8" fill="none" stroke="#1f5ff0" stroke-width="1.4"/></svg>
<div class="t" style="left:1340.3px;top:817.0px;font-size:16px;color:#1e1e1e;letter-spacing:0.01px;">Aspect Ratio</div>
<div class="a" style="left:1286px;top:843.5px;width:350px;height:1px;background:#d2ced2;"></div>
<div class="a" style="left:1291.3px;top:851.2px;width:340.2px;height:21.3px;background:#f3f0f3;border:1px solid #9e9b9e;border-radius:5px;"></div>
<div class="t" style="left:1161.15px;width:600px;text-align:center;top:854.7px;font-size:16px;color:#1e1e1e;letter-spacing:0.11px;">Add 2 Constraints</div>
</body></html>
